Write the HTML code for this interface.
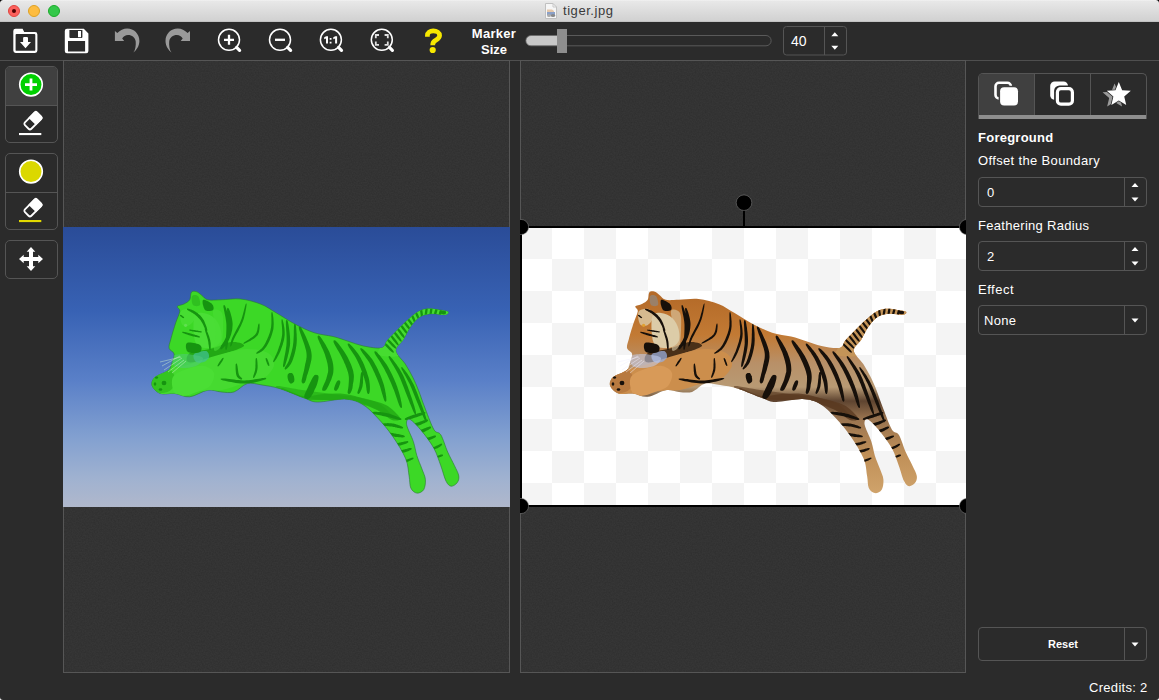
<!DOCTYPE html>
<html><head><meta charset="utf-8">
<style>
*{box-sizing:border-box;margin:0;padding:0}
html,body{width:1159px;height:700px;overflow:hidden;background:linear-gradient(#000 0,#000 50%,#fff 50%)}
body{font-family:"Liberation Sans",sans-serif;position:relative}
.a{position:absolute}
#win{position:absolute;left:0;top:0;width:1159px;height:700px;background:#2b2b2b;border-radius:3px 3px 3px 3px;overflow:hidden}
#title{left:0;top:0;width:1159px;height:22px;background:linear-gradient(#f5f5f5 0,#e8e8e8 1px,#d1d1d1 21px,#c2c2c2 21px);border-radius:3px 3px 0 0}
.tl{width:12px;height:12px;border-radius:50%;top:5px}
#toolbar{left:0;top:22px;width:1159px;height:38px;background:#2b2b2b}
#sep{left:0;top:60px;width:1159px;height:1px;background:#4f4f4f}
.panel{top:60px;height:613px;border:1px solid #565656;background:#333;overflow:hidden}
.grp{left:5px;width:53px;border:1px solid #555;border-radius:5px;overflow:hidden}
.lbl{color:#fff;font-size:13px;left:978px;white-space:nowrap}
.box{left:978px;width:169px;height:30px;border:1px solid #555;border-radius:4px}
.box .div{position:absolute;left:145px;top:0;width:1px;height:100%;background:#555}
</style></head><body>
<div id="win">
<div id="title" class="a">
  <div class="a tl" style="left:8px;background:#fc605c;border:1px solid #e0443e"><div class="a" style="left:3px;top:3px;width:4px;height:4px;border-radius:50%;background:#4d0000"></div></div>
  <div class="a tl" style="left:28px;background:#fdbc40;border:1px solid #dea123"></div>
  <div class="a tl" style="left:48px;background:#34c84a;border:1px solid #1aab29"></div>
  <svg class="a" style="left:545px;top:3px" width="12" height="16" viewBox="0 0 12 16"><path d="M0.5 0.5H8L11.5 4V15.5H0.5Z" fill="#f6f6f6" stroke="#c0c0c0"/><path d="M8 0.5V4H11.5" fill="none" stroke="#c8c8c8"/><path d="M2,6.5 H7 L9,8 V10 H2Z" fill="#d8a878" opacity="0.6"/><path d="M2,9 H10 V12 H2Z" fill="#8aa0c8"/><ellipse cx="8" cy="12.5" rx="2.2" ry="1.6" fill="#888"/><ellipse cx="4" cy="12.5" rx="2" ry="1.5" fill="#aaa"/></svg>
  <div class="a" style="left:563px;top:3px;font-size:13px;color:#3a3a3a;letter-spacing:0.55px">tiger.jpg</div>
</div>
<div id="toolbar" class="a"></div>
<div id="sep" class="a"></div>
<svg class="a" style="left:0;top:0" width="1159" height="60" viewBox="0 0 1159 60">
<g fill="#fff" fill-rule="evenodd">
<path d="M13.3,31 Q13.3,28.8 15.5,28.8 H22.6 L24.2,32 H35 Q37.4,32 37.4,34.4 V50.6 Q37.4,53 35,53 H15.7 Q13.3,53 13.3,50.6 Z M15.6,35 Q15.6,34.1 16.5,34.1 H34.4 Q35.3,34.1 35.3,35 V49.9 Q35.3,50.8 34.4,50.8 H16.5 Q15.6,50.8 15.6,49.9 Z"/>
<path d="M23.1,38 Q23.1,36.9 24.2,36.9 H26.9 Q28,36.9 28,38 V42 H31 L25.5,48.3 L20,42 H23.1 Z"/>
<path d="M67,28.8 H83.8 L88.4,33.4 V51 Q88.4,53.2 86.2,53.2 H67 Q64.8,53.2 64.8,51 V31 Q64.8,28.8 67,28.8 Z M69.4,30.1 V37 Q69.4,38 70.4,38 H81.4 Q82.4,38 82.4,37 V30.1 Z M68,41 V51.6 H85.1 V41 Z"/>
<rect x="78" y="31" width="3" height="6.2"/>
</g>
<g fill="#9a9a9a">
<path id="undo" d="M114.9,30.9 L117.3,33 C120,30.5 123.5,28.6 127.2,28.6 C134,28.6 139.4,34 139.4,41 C139.4,46 136.5,50 133.4,52.6 C135.5,49.5 136,45 135.7,41.4 C135.2,37.5 132,35 128,35 C125.5,35 123.5,36.3 122.2,38.4 L124.2,41 H114.9 Z"/>
<use href="#undo" transform="translate(304.9,0) scale(-1,1)"/>
</g>
<g fill="none" stroke="#fff">
<g id="mag"><circle cx="229" cy="39.8" r="10.5" stroke-width="1.5"/><path d="M236.6,47.4 L239.6,50.4" stroke-width="3.2" stroke-linecap="round"/></g>
<path d="M224,39.8 H234 M229,34.8 V44.8" stroke-width="2.3"/>
<use href="#mag" transform="translate(51,0)"/>
<path d="M275,39.8 H285" stroke-width="2.3"/>
<use href="#mag" transform="translate(101.9,0)"/>
<use href="#mag" transform="translate(152.8,0)"/>
<path d="M375.8,38.2 V35 H379 M384.6,35 H387.8 V38.2 M387.8,41.6 V44.8 H384.6 M379,44.8 H375.8 V41.6" stroke="#e0e0e0" stroke-width="1.8"/>
</g>
<path d="M324.2,37.2 L326.2,36.3 H328 V43.6 H326 V38.4 L324.2,39.2 Z M333.3,37.2 L335.3,36.3 H337.1 V43.6 H335.1 V38.4 L333.3,39.2 Z M329.7,37.9 H331.5 V39.7 H329.7 Z M329.7,41.8 H331.5 V43.6 H329.7 Z" fill="#fff"/>
<path d="M427.4,36.8 V35.5 C427.4,32.5 430,30.8 433.2,30.8 C436.8,30.8 439.6,32.8 439.6,35.5 C439.6,38.4 436.6,39.6 434.6,41 C433,42.2 432.7,43 432.7,45.2" fill="none" stroke="#f7e800" stroke-width="4.7"/><circle cx="432.7" cy="50" r="3.1" fill="#f7e800"/>
<text x="494" y="38" font-size="13" font-weight="bold" fill="#fff" text-anchor="middle" font-family="Liberation Sans" letter-spacing="0.3">Marker</text>
<text x="494" y="53.6" font-size="13" font-weight="bold" fill="#fff" text-anchor="middle" font-family="Liberation Sans">Size</text>
<path d="M558,35.5 H766 A5.15,5.15 0 0 1 766,45.8 H558" fill="none" stroke="#5a5a5a" stroke-width="1"/>
<path d="M531,35.5 H558 V45.8 H531 A5.15,5.15 0 0 1 531,35.5 Z" fill="#c8c8c8" stroke="#6a6a6a" stroke-width="0.8"/>
<rect x="557" y="29" width="10" height="24" fill="#8e8e8e"/>
<rect x="783.5" y="26.5" width="63" height="28.5" rx="3" fill="none" stroke="#555"/>
<path d="M824.5,26.5 V55" stroke="#555"/>
<text x="791" y="46" font-size="14" fill="#fff" font-family="Liberation Sans">40</text>
<path d="M831.3,36.3 L834.8,32.3 L838.3,36.3 Z M831.3,45.8 L838.3,45.8 L834.8,49.8 Z" fill="#fff"/>
</svg>

<!-- panels -->
<svg class="a" style="left:0;top:0;width:0;height:0"><filter id="nz" x="0" y="0" width="100%" height="100%"><feTurbulence type="fractalNoise" baseFrequency="0.7" numOctaves="2" seed="7"/><feColorMatrix values="0 0 0 0 0  0 0 0 0 0  0 0 0 0 0  0.22 0 0 0 -0.06"/></filter></svg>
<div class="a panel" style="left:63px;width:447px;background:#363636"><svg width="445" height="611" style="display:block"><rect width="445" height="611" filter="url(#nz)"/></svg></div>
<div class="a panel" style="left:520px;width:446px;background:#363636"><svg width="444" height="611" style="display:block"><rect width="444" height="611" filter="url(#nz)"/></svg></div>
<!--T-->
<svg class="a" style="left:0;top:0;z-index:2" width="1159" height="700" viewBox="0 0 1159 700">
<defs>
<linearGradient id="sky" x1="0" y1="0" x2="0" y2="1">
<stop offset="0" stop-color="#2a4c98"/><stop offset="0.3" stop-color="#3862b4"/><stop offset="0.55" stop-color="#5a80c8"/><stop offset="0.75" stop-color="#82a0d0"/><stop offset="0.9" stop-color="#a0b2d0"/><stop offset="1" stop-color="#b0b8cc"/>
</linearGradient>
<linearGradient id="orange" gradientUnits="userSpaceOnUse" x1="0" y1="295" x2="0" y2="495">
<stop offset="0" stop-color="#b46a28"/><stop offset="0.2" stop-color="#c27a34"/><stop offset="0.34" stop-color="#b89068"/><stop offset="0.46" stop-color="#b89a74"/><stop offset="0.53" stop-color="#5e4430"/><stop offset="0.62" stop-color="#9a7450"/><stop offset="0.8" stop-color="#c09058"/><stop offset="1" stop-color="#d0a46c"/></linearGradient>
<path id="tg" d="M649.3,292.4 C650.4,291.0 652.4,291.1 654.2,291.6 C656.0,292.1 658.1,294.1 660.0,295.5 C661.9,296.9 662.6,299.1 665.8,299.8 C668.9,300.5 673.4,299.9 678.9,299.8 C684.4,299.7 691.9,298.3 698.6,299.0 C705.3,299.7 713.1,301.9 719.0,304.2 C724.9,306.5 728.5,309.5 734.2,312.8 C739.9,316.1 746.9,320.9 753.2,324.2 C759.5,327.5 765.8,330.6 772.1,332.7 C778.4,334.8 785.4,335.1 791.1,336.5 C796.8,337.9 801.2,339.7 806.3,341.3 C811.4,342.9 816.0,344.9 821.5,346.0 C827.0,347.1 835.6,348.7 839.5,347.9 C843.4,347.1 843.2,343.1 845.0,341.0 C846.8,338.9 847.0,338.7 850.0,335.6 C853.0,332.5 859.2,326.1 863.3,322.3 C867.4,318.5 871.1,315.0 874.6,312.8 C878.1,310.6 880.3,309.5 884.1,309.0 C887.9,308.5 893.8,309.4 897.4,309.9 C901.0,310.4 905.0,311.0 906.0,311.8 C907.0,312.6 905.8,314.4 903.1,314.7 C900.4,315.0 893.9,313.4 889.8,313.7 C885.7,314.0 881.9,314.5 878.4,316.6 C874.9,318.7 871.8,322.3 869.0,326.1 C866.2,329.9 863.9,335.3 861.4,339.4 C858.9,343.5 853.5,346.6 853.8,350.7 C854.1,354.8 860.5,359.6 863.3,364.0 C866.1,368.4 868.6,372.9 870.8,377.3 C873.0,381.7 874.4,385.0 876.5,390.3 C878.6,395.6 880.8,402.5 883.4,409.1 C886.0,415.7 889.4,425.4 892.0,429.7 C894.6,434.0 896.5,431.1 898.8,434.8 C901.1,438.5 903.4,446.9 905.7,452.0 C908.0,457.1 910.6,461.7 912.5,465.7 C914.4,469.7 916.4,473.1 916.8,476.0 C917.2,478.9 916.4,481.1 915.1,482.8 C913.8,484.5 911.0,486.5 909.1,486.2 C907.2,485.9 905.7,484.5 904.0,481.1 C902.3,477.7 900.8,471.1 898.8,465.7 C896.8,460.3 895.1,454.2 892.0,448.5 C888.9,442.8 884.0,436.2 880.0,431.4 C876.0,426.5 870.6,420.5 868.0,419.4 C865.4,418.3 864.0,420.9 864.6,424.6 C865.2,428.3 869.7,436.6 871.4,441.7 C873.1,446.8 873.4,450.8 874.8,455.4 C876.2,460.0 878.6,465.1 880.0,469.1 C881.4,473.1 883.1,476.0 883.4,479.4 C883.7,482.8 883.1,487.4 881.7,489.7 C880.3,492.0 876.9,493.4 874.8,493.1 C872.6,492.8 870.1,490.9 868.8,488.0 C867.5,485.1 868.0,480.9 867.1,476.0 C866.2,471.1 866.4,465.4 863.7,458.8 C861.0,452.2 855.5,443.4 850.8,436.5 C846.1,429.6 840.5,423.1 835.4,417.7 C830.3,412.3 825.5,407.1 820.0,404.0 C814.5,400.9 809.9,399.4 802.5,399.1 C795.1,398.8 782.5,402.1 775.9,402.0 C769.2,401.9 768.9,400.4 762.6,398.2 C756.3,396.0 745.1,390.9 738.0,388.7 C730.9,386.5 725.5,385.9 720.0,385.0 C714.5,384.1 709.9,382.5 705.2,383.6 C700.6,384.8 696.5,390.5 692.1,391.9 C687.7,393.3 683.3,392.2 678.9,391.9 C674.5,391.6 671.0,389.4 665.8,390.2 C660.6,391.0 653.2,396.2 647.7,396.8 C642.2,397.4 637.8,394.1 632.9,393.5 C628.0,392.9 621.9,394.9 618.1,393.5 C614.3,392.1 610.7,388.0 609.9,385.3 C609.1,382.6 610.5,379.6 613.2,377.1 C615.9,374.6 623.6,372.7 626.3,370.5 C629.0,368.3 628.6,366.6 629.6,363.9 C630.6,361.1 632.5,356.6 632.1,354.0 C631.7,351.4 627.7,350.8 627.1,348.3 C626.5,345.8 627.7,343.4 628.8,339.2 C629.9,334.9 632.2,327.4 633.7,322.8 C635.2,318.2 637.5,314.0 637.8,311.3 C638.1,308.6 634.6,307.6 635.3,306.4 C636.0,305.2 639.9,305.1 642.0,304.0 C644.1,302.9 646.5,301.7 647.7,299.8 C648.9,297.9 648.2,293.8 649.3,292.4 Z"/>
<clipPath id="tclip"><use href="#tg"/></clipPath>
<clipPath id="clipR"><rect x="520" y="61" width="446" height="611"/></clipPath>
<clipPath id="clipImg"><rect x="522" y="228" width="444" height="277"/></clipPath>
</defs>
<rect x="63" y="227" width="447" height="280" fill="url(#sky)"/>
<g transform="translate(-458,0)">
<use href="#tg" fill="#3cd826" stroke="#2a7a30" stroke-width="0.6"/>
<g clip-path="url(#tclip)">
<path d="M648.0,353.0 C651.7,350.8 661.0,350.8 668.0,349.0 C675.0,347.2 684.3,342.5 690.0,342.0 C695.7,341.5 703.3,344.0 702.0,346.0 C700.7,348.0 688.7,351.7 682.0,354.0 C675.3,356.3 668.0,358.7 662.0,360.0 C656.0,361.3 648.3,363.2 646.0,362.0 C643.7,360.8 644.3,355.2 648.0,353.0 Z" fill="#22a814"/>
<path d="M611.0,380.0 C611.0,376.5 613.5,374.0 617.0,372.0 C620.5,370.0 627.3,369.2 632.0,368.0 C636.7,366.8 640.3,366.3 645.0,365.0 C649.7,363.7 654.2,361.8 660.0,360.0 C665.8,358.2 672.7,355.8 680.0,354.0 C687.3,352.2 696.3,349.2 704.0,349.0 C711.7,348.8 721.3,350.3 726.0,353.0 C730.7,355.7 732.7,360.8 732.0,365.0 C731.3,369.2 727.3,374.8 722.0,378.0 C716.7,381.2 707.0,382.0 700.0,384.0 C693.0,386.0 687.5,388.8 680.0,390.0 C672.5,391.2 662.5,390.3 655.0,391.0 C647.5,391.7 641.3,393.7 635.0,394.0 C628.7,394.3 621.0,395.3 617.0,393.0 C613.0,390.7 611.0,383.5 611.0,380.0 Z" fill="#46da30"/>
<path d="M836.0,354.0 C834.3,351.0 841.7,343.7 846.0,338.0 C850.3,332.3 856.0,325.0 862.0,320.0 C868.0,315.0 874.3,309.5 882.0,308.0 C889.7,306.5 904.3,309.5 908.0,311.0 C911.7,312.5 907.7,316.2 904.0,317.0 C900.3,317.8 891.3,314.2 886.0,316.0 C880.7,317.8 876.3,323.0 872.0,328.0 C867.7,333.0 862.7,341.3 860.0,346.0 C857.3,350.7 860.0,354.7 856.0,356.0 C852.0,357.3 837.7,357.0 836.0,354.0 Z" fill="#46dc30"/>
<path d="M610.0,381.0 C610.8,378.2 613.2,374.0 616.0,372.0 C618.8,370.0 624.2,368.0 627.0,369.0 C629.8,370.0 632.5,374.7 633.0,378.0 C633.5,381.3 632.2,386.5 630.0,389.0 C627.8,391.5 623.2,393.0 620.0,393.0 C616.8,393.0 612.7,391.0 611.0,389.0 C609.3,387.0 609.2,383.8 610.0,381.0 Z" fill="#34c420"/>
<path d="M631.0,377.0 C633.2,373.2 639.8,370.8 645.0,369.0 C650.2,367.2 657.5,365.3 662.0,366.0 C666.5,366.7 671.0,369.7 672.0,373.0 C673.0,376.3 670.8,382.8 668.0,386.0 C665.2,389.2 659.5,390.3 655.0,392.0 C650.5,393.7 644.8,396.0 641.0,396.0 C637.2,396.0 633.7,395.2 632.0,392.0 C630.3,388.8 628.8,380.8 631.0,377.0 Z" fill="#4ade34"/>
<path d="M652.0,354.0 C653.7,352.2 661.5,350.5 664.0,351.0 C666.5,351.5 667.3,355.2 667.0,357.0 C666.7,358.8 664.2,361.2 662.0,362.0 C659.8,362.8 655.7,363.3 654.0,362.0 C652.3,360.7 650.3,355.8 652.0,354.0 Z" fill="#40c090" opacity="0.75"/>
<ellipse cx="614.5" cy="377.5" rx="1.6" ry="1.2" fill="#169410"/><ellipse cx="613" cy="384" rx="1.3" ry="1.7" fill="#169410"/><ellipse cx="618.5" cy="389.5" rx="1.8" ry="1.2" fill="#169410"/><ellipse cx="622" cy="383" rx="2.4" ry="2.2" fill="#169410"/>
<path d="M735.0,386.0 C738.3,385.7 750.8,388.7 760.0,390.0 C769.2,391.3 780.0,392.7 790.0,394.0 C800.0,395.3 812.0,396.3 820.0,398.0 C828.0,399.7 832.7,400.7 838.0,404.0 C843.3,407.3 851.7,416.7 852.0,418.0 C852.3,419.3 846.2,414.7 840.0,412.0 C833.8,409.3 825.0,404.0 815.0,402.0 C805.0,400.0 789.2,400.8 780.0,400.0 C770.8,399.2 766.7,398.3 760.0,397.0 C753.3,395.7 744.2,393.8 740.0,392.0 C735.8,390.2 731.7,386.3 735.0,386.0 Z" fill="#22a814" opacity="0.6"/>
<path d="M740.0,388.0 C742.7,388.2 754.0,395.0 761.0,396.0 C768.0,397.0 774.9,394.3 781.8,394.0 C788.7,393.7 795.6,393.2 802.5,394.0 C809.4,394.8 816.3,397.2 823.2,399.0 C830.1,400.8 838.1,401.8 843.9,405.0 C849.7,408.2 857.0,415.5 858.0,418.0 C859.0,420.5 853.8,421.3 850.0,420.0 C846.2,418.7 840.8,412.8 835.0,410.0 C829.2,407.2 822.5,404.7 815.0,403.0 C807.5,401.3 798.3,400.5 790.0,400.0 C781.7,399.5 772.5,400.8 765.0,400.0 C757.5,399.2 749.2,397.0 745.0,395.0 C740.8,393.0 737.3,387.8 740.0,388.0 Z" fill="#22a814" opacity="0.8"/>
<path d="M652.3,316.6 C653.8,312.5 657.7,312.7 661.0,312.9 C664.3,313.1 669.3,315.2 672.2,317.9 C675.1,320.6 677.5,325.1 678.5,329.0 C679.5,332.9 680.0,338.4 678.5,341.5 C677.0,344.6 673.3,346.9 669.8,347.7 C666.3,348.5 660.2,348.1 657.3,346.5 C654.4,344.9 653.1,342.8 652.3,337.8 C651.5,332.8 650.8,320.8 652.3,316.6 Z" fill="#4ade36"/>
<path d="M638.7,311.6 C640.2,309.1 646.1,308.3 648.6,309.1 C651.1,309.9 653.8,313.9 653.6,316.6 C653.4,319.3 649.7,324.1 647.4,325.3 C645.1,326.5 641.3,326.3 639.9,324.0 C638.5,321.7 637.2,314.1 638.7,311.6 Z" fill="#4ade36" opacity="0.8"/>
<path d="M671.0,311.0 C672.0,308.2 678.3,309.8 680.0,313.0 C681.7,316.2 681.2,324.5 681.0,330.0 C680.8,335.5 680.5,342.7 679.0,346.0 C677.5,349.3 672.8,352.7 672.0,350.0 C671.2,347.3 674.2,336.5 674.0,330.0 C673.8,323.5 670.0,313.8 671.0,311.0 Z" fill="#4ade36" opacity="0.6"/>
<path d="M629.0,357.0 C630.2,355.0 636.2,354.3 640.0,354.0 C643.8,353.7 648.5,354.3 652.0,355.0 C655.5,355.7 660.3,356.3 661.0,358.0 C661.7,359.7 658.8,363.3 656.0,365.0 C653.2,366.7 647.8,367.8 644.0,368.0 C640.2,368.2 635.5,367.8 633.0,366.0 C630.5,364.2 627.8,359.0 629.0,357.0 Z" fill="#50c880" opacity="0.5"/>
<path fill="#169410" d="M744.4,320.0 L743.9,321.2 L743.9,322.7 L743.9,324.4 L744.0,326.3 L744.1,328.3 L744.2,330.5 L744.4,332.7 L744.5,335.0 L744.6,337.2 L744.6,339.4 L744.6,341.5 L744.5,343.5 L744.4,345.4 L744.1,347.6 L743.8,349.8 L743.4,352.0 L743.0,354.3 L742.5,356.5 L742.1,358.7 L741.7,360.8 L741.4,362.7 L741.1,364.4 L741.0,365.9 L741.3,367.1 L741.9,367.3 L742.7,366.3 L743.3,364.9 L743.8,363.3 L744.4,361.4 L745.0,359.4 L745.6,357.2 L746.1,355.0 L746.7,352.7 L747.1,350.4 L747.5,348.1 L747.9,345.8 L748.1,343.7 L748.1,341.6 L748.1,339.4 L748.0,337.1 L747.8,334.7 L747.6,332.4 L747.3,330.2 L747.0,328.0 L746.7,326.0 L746.4,324.1 L746.0,322.4 L745.7,321.1 L745.0,320.0ZM756.9,326.4 L756.8,328.0 L757.2,329.7 L757.8,331.6 L758.5,333.8 L759.4,336.2 L760.2,338.6 L761.1,341.1 L762.0,343.6 L762.8,345.9 L763.4,348.2 L764.0,350.2 L764.3,351.9 L764.5,353.4 L764.6,354.7 L764.6,356.0 L764.6,357.2 L764.4,358.3 L764.3,359.4 L764.0,360.6 L763.8,361.7 L763.5,362.9 L763.2,364.1 L763.0,365.4 L762.7,366.7 L762.5,368.0 L762.2,369.4 L761.9,370.9 L761.5,372.4 L761.1,373.9 L760.7,375.4 L760.4,376.9 L760.1,378.3 L759.8,379.6 L759.6,380.8 L759.6,381.8 L760.0,382.8 L760.8,383.0 L761.7,382.5 L762.3,381.6 L762.8,380.6 L763.4,379.4 L764.0,378.1 L764.6,376.7 L765.1,375.2 L765.7,373.7 L766.2,372.1 L766.7,370.6 L767.1,369.1 L767.5,367.7 L767.8,366.5 L768.1,365.3 L768.4,364.1 L768.7,362.9 L769.0,361.6 L769.3,360.3 L769.5,359.0 L769.6,357.5 L769.7,356.0 L769.6,354.4 L769.4,352.7 L769.1,350.9 L768.6,348.9 L767.9,346.8 L767.0,344.4 L766.1,342.0 L765.0,339.6 L764.0,337.1 L762.9,334.7 L761.8,332.5 L760.7,330.4 L759.7,328.6 L758.8,327.1 L757.7,326.2ZM775.7,335.9 L775.6,337.2 L775.9,338.5 L776.5,340.0 L777.2,341.6 L777.9,343.3 L778.8,345.1 L779.6,346.9 L780.5,348.8 L781.3,350.6 L782.0,352.3 L782.7,354.0 L783.2,355.5 L783.6,356.9 L784.1,358.4 L784.5,359.8 L784.8,361.1 L785.2,362.5 L785.5,363.8 L785.7,365.1 L785.9,366.4 L786.1,367.7 L786.1,369.0 L786.2,370.3 L786.1,371.6 L786.0,373.0 L785.7,374.6 L785.3,376.3 L784.9,378.0 L784.3,379.8 L783.8,381.6 L783.2,383.4 L782.7,385.1 L782.2,386.6 L781.8,388.1 L781.7,389.4 L782.0,390.6 L782.8,390.8 L783.8,390.2 L784.6,389.2 L785.3,387.9 L786.1,386.5 L786.9,384.9 L787.7,383.1 L788.5,381.3 L789.3,379.5 L789.9,377.6 L790.5,375.8 L791.0,373.9 L791.3,372.2 L791.4,370.5 L791.5,368.9 L791.4,367.3 L791.3,365.8 L791.1,364.2 L790.8,362.7 L790.5,361.2 L790.1,359.7 L789.6,358.2 L789.1,356.7 L788.6,355.3 L788.0,353.7 L787.4,352.1 L786.5,350.3 L785.6,348.5 L784.6,346.7 L783.6,344.8 L782.5,343.1 L781.5,341.4 L780.4,339.8 L779.4,338.3 L778.5,337.1 L777.6,336.1 L776.5,335.5ZM791.6,340.6 L791.5,341.9 L791.9,343.1 L792.6,344.5 L793.4,345.9 L794.3,347.5 L795.2,349.2 L796.2,350.8 L797.2,352.5 L798.2,354.2 L799.1,355.9 L799.9,357.4 L800.6,358.9 L801.3,360.3 L801.9,361.7 L802.5,363.2 L803.2,364.6 L803.7,366.0 L804.3,367.4 L804.8,368.8 L805.3,370.2 L805.7,371.5 L806.1,372.8 L806.4,374.1 L806.6,375.3 L806.8,376.6 L806.9,377.9 L806.9,379.3 L806.9,380.7 L806.8,382.2 L806.7,383.6 L806.6,385.0 L806.5,386.3 L806.4,387.6 L806.4,388.7 L806.6,389.8 L807.2,390.6 L808.0,390.8 L808.8,390.1 L809.3,389.3 L809.7,388.2 L810.1,387.0 L810.5,385.7 L810.9,384.3 L811.2,382.7 L811.5,381.2 L811.7,379.5 L811.8,377.9 L811.9,376.3 L811.8,374.7 L811.5,373.1 L811.3,371.6 L810.9,370.1 L810.4,368.5 L809.9,367.0 L809.4,365.5 L808.8,364.0 L808.1,362.5 L807.4,361.0 L806.7,359.5 L806.0,358.0 L805.2,356.5 L804.3,355.0 L803.4,353.4 L802.3,351.7 L801.1,350.0 L800.0,348.4 L798.8,346.8 L797.6,345.3 L796.5,343.8 L795.4,342.6 L794.4,341.5 L793.4,340.6 L792.2,340.2ZM805.7,343.8 L805.8,344.9 L806.3,346.0 L806.9,347.2 L807.7,348.4 L808.6,349.8 L809.6,351.2 L810.6,352.7 L811.6,354.2 L812.6,355.8 L813.5,357.3 L814.3,358.8 L815.1,360.3 L815.8,361.8 L816.6,363.4 L817.3,365.1 L818.0,366.8 L818.8,368.6 L819.5,370.4 L820.1,372.2 L820.8,373.9 L821.3,375.6 L821.9,377.3 L822.4,378.8 L822.8,380.2 L823.2,381.6 L823.5,382.9 L823.8,384.3 L824.0,385.6 L824.2,386.9 L824.4,388.2 L824.5,389.4 L824.7,390.5 L824.9,391.5 L825.1,392.5 L825.4,393.3 L826.1,393.9 L826.7,393.9 L827.3,393.2 L827.5,392.4 L827.7,391.4 L827.8,390.4 L827.9,389.2 L827.9,388.0 L827.9,386.6 L827.8,385.2 L827.7,383.7 L827.5,382.2 L827.3,380.7 L827.0,379.2 L826.6,377.6 L826.1,375.9 L825.5,374.2 L825.0,372.5 L824.3,370.6 L823.6,368.8 L822.9,367.0 L822.2,365.1 L821.4,363.3 L820.6,361.6 L819.7,359.9 L818.9,358.3 L818.0,356.7 L816.9,355.1 L815.9,353.6 L814.7,352.0 L813.6,350.5 L812.4,349.1 L811.3,347.8 L810.2,346.6 L809.2,345.5 L808.2,344.5 L807.3,343.8 L806.3,343.4ZM818.3,348.5 L818.4,349.6 L818.9,350.6 L819.6,351.6 L820.3,352.7 L821.2,353.9 L822.2,355.2 L823.1,356.5 L824.1,357.9 L825.1,359.3 L826.1,360.7 L827.0,362.1 L827.8,363.5 L828.6,364.9 L829.4,366.5 L830.2,368.1 L831.0,369.8 L831.8,371.5 L832.7,373.3 L833.4,375.1 L834.2,376.8 L835.0,378.6 L835.7,380.3 L836.4,382.0 L837.0,383.6 L837.6,385.2 L838.2,386.9 L838.7,388.7 L839.2,390.5 L839.7,392.2 L840.2,394.0 L840.7,395.6 L841.2,397.2 L841.6,398.6 L842.1,399.9 L842.6,401.0 L843.4,401.8 L844.0,401.6 L844.4,400.6 L844.4,399.4 L844.3,398.1 L844.2,396.6 L843.9,394.9 L843.7,393.2 L843.3,391.4 L843.0,389.5 L842.5,387.6 L842.1,385.8 L841.6,383.9 L841.0,382.2 L840.4,380.5 L839.8,378.7 L839.1,376.9 L838.3,375.1 L837.5,373.3 L836.7,371.4 L835.9,369.6 L835.0,367.8 L834.1,366.1 L833.2,364.4 L832.3,362.8 L831.4,361.3 L830.5,359.8 L829.4,358.3 L828.3,356.9 L827.2,355.5 L826.0,354.2 L824.9,352.9 L823.7,351.8 L822.7,350.7 L821.7,349.8 L820.7,349.0 L819.9,348.4 L818.9,348.1ZM832.4,351.6 L832.5,352.7 L832.9,353.8 L833.6,355.0 L834.4,356.2 L835.2,357.6 L836.2,359.1 L837.2,360.6 L838.2,362.1 L839.2,363.7 L840.1,365.2 L841.0,366.8 L841.9,368.3 L842.7,369.8 L843.5,371.4 L844.3,373.0 L845.1,374.6 L845.9,376.3 L846.7,378.1 L847.5,379.8 L848.3,381.5 L849.1,383.3 L849.8,385.0 L850.5,386.7 L851.2,388.4 L851.9,390.1 L852.6,391.9 L853.2,393.8 L853.9,395.7 L854.6,397.7 L855.2,399.6 L855.8,401.4 L856.4,403.1 L857.0,404.7 L857.6,406.1 L858.2,407.3 L859.1,408.1 L859.7,407.9 L860.0,406.8 L859.9,405.5 L859.7,404.0 L859.4,402.3 L859.0,400.5 L858.6,398.6 L858.1,396.6 L857.6,394.6 L857.0,392.6 L856.4,390.6 L855.8,388.7 L855.2,386.8 L854.5,385.1 L853.9,383.3 L853.1,381.5 L852.4,379.7 L851.6,377.9 L850.8,376.2 L850.0,374.4 L849.1,372.7 L848.2,371.0 L847.3,369.3 L846.5,367.7 L845.5,366.1 L844.6,364.6 L843.5,363.0 L842.4,361.4 L841.3,359.9 L840.2,358.4 L839.0,357.0 L837.9,355.6 L836.8,354.4 L835.8,353.3 L834.9,352.3 L834.0,351.6 L833.0,351.2ZM846.6,356.3 L846.7,357.4 L847.2,358.6 L847.9,359.9 L848.7,361.3 L849.6,362.8 L850.6,364.4 L851.6,366.1 L852.6,367.8 L853.6,369.5 L854.6,371.2 L855.4,372.8 L856.2,374.3 L856.9,375.8 L857.6,377.2 L858.3,378.7 L858.9,380.2 L859.5,381.8 L860.1,383.3 L860.7,384.8 L861.4,386.4 L862.0,388.0 L862.6,389.6 L863.2,391.3 L863.9,393.0 L864.6,394.7 L865.4,396.7 L866.2,398.7 L867.0,400.8 L867.8,402.9 L868.7,405.0 L869.5,407.0 L870.3,408.9 L871.0,410.7 L871.7,412.2 L872.4,413.5 L873.3,414.4 L873.9,414.2 L874.0,412.9 L873.8,411.5 L873.4,409.9 L872.8,408.0 L872.3,406.0 L871.6,404.0 L870.9,401.8 L870.2,399.6 L869.5,397.5 L868.8,395.4 L868.1,393.4 L867.5,391.6 L866.9,389.9 L866.3,388.3 L865.7,386.6 L865.1,385.0 L864.5,383.4 L863.9,381.8 L863.2,380.3 L862.6,378.7 L861.9,377.1 L861.2,375.6 L860.4,374.1 L859.6,372.5 L858.7,370.9 L857.7,369.3 L856.6,367.6 L855.5,366.0 L854.4,364.3 L853.2,362.7 L852.1,361.2 L851.0,359.8 L850.0,358.5 L849.0,357.4 L848.2,356.5 L847.2,355.9ZM859.3,367.3 L859.3,368.3 L859.7,369.4 L860.3,370.5 L861.0,371.8 L861.7,373.2 L862.5,374.6 L863.4,376.1 L864.2,377.6 L865.1,379.2 L865.9,380.7 L866.7,382.2 L867.4,383.6 L868.1,385.1 L868.7,386.5 L869.4,388.0 L870.0,389.6 L870.6,391.1 L871.3,392.7 L871.9,394.2 L872.5,395.8 L873.2,397.4 L873.8,399.1 L874.5,400.7 L875.1,402.3 L875.9,404.0 L876.6,405.8 L877.4,407.7 L878.2,409.7 L879.0,411.7 L879.8,413.6 L880.6,415.5 L881.4,417.3 L882.2,418.9 L882.8,420.3 L883.5,421.5 L884.4,422.3 L884.8,422.1 L884.9,420.9 L884.6,419.6 L884.2,418.1 L883.7,416.4 L883.1,414.6 L882.4,412.6 L881.7,410.6 L881.0,408.6 L880.3,406.6 L879.6,404.7 L878.9,402.8 L878.3,401.1 L877.6,399.4 L877.0,397.8 L876.4,396.2 L875.8,394.6 L875.2,392.9 L874.5,391.3 L873.9,389.8 L873.2,388.2 L872.6,386.6 L871.9,385.1 L871.1,383.6 L870.4,382.2 L869.6,380.7 L868.7,379.1 L867.8,377.6 L866.8,376.1 L865.9,374.6 L864.9,373.1 L863.9,371.8 L863.0,370.5 L862.2,369.4 L861.3,368.4 L860.6,367.6 L859.7,367.1ZM774.1,374.8 L772.6,375.1 L771.8,376.0 L771.0,377.1 L770.3,378.3 L769.5,379.7 L768.8,381.2 L768.0,382.7 L767.3,384.2 L766.7,385.6 L766.1,387.0 L765.5,388.2 L765.0,389.2 L764.6,390.1 L764.2,390.9 L763.9,391.7 L763.5,392.5 L763.2,393.2 L762.9,393.9 L762.6,394.6 L762.4,395.3 L762.3,395.9 L762.2,396.6 L762.3,397.3 L763.1,398.3 L764.1,398.9 L765.3,399.2 L766.0,399.1 L766.5,398.8 L767.1,398.4 L767.7,397.9 L768.2,397.4 L768.8,396.7 L769.4,396.0 L770.0,395.1 L770.5,394.2 L771.0,393.3 L771.6,392.2 L772.1,391.1 L772.6,389.7 L773.2,388.3 L773.7,386.7 L774.2,385.1 L774.7,383.5 L775.2,381.9 L775.5,380.4 L775.8,378.9 L776.0,377.6 L775.9,376.4 L775.1,375.2ZM747.4,373.1 L746.1,373.9 L745.7,374.7 L745.6,375.6 L745.5,376.6 L745.6,377.6 L745.8,378.7 L746.1,379.7 L746.4,380.7 L746.8,381.6 L747.3,382.3 L747.9,382.9 L749.5,383.1 L750.5,382.9 L751.8,382.1 L752.2,381.3 L752.3,380.4 L752.4,379.4 L752.3,378.4 L752.1,377.3 L751.8,376.3 L751.5,375.3 L751.1,374.4 L750.6,373.7 L750.0,373.1 L748.4,372.9ZM704.1,303.6 L703.6,304.3 L703.3,305.3 L702.9,306.5 L702.6,307.9 L702.2,309.3 L701.8,310.9 L701.4,312.5 L701.0,314.1 L700.5,315.8 L700.0,317.4 L699.5,318.9 L699.0,320.3 L698.4,321.7 L697.8,323.2 L697.0,324.7 L696.2,326.2 L695.4,327.8 L694.6,329.3 L693.8,330.8 L693.0,332.3 L692.3,333.7 L691.6,335.0 L691.0,336.3 L690.4,337.5 L690.0,338.5 L689.6,339.6 L689.3,340.5 L689.0,341.4 L688.8,342.2 L688.6,343.0 L688.5,343.7 L688.4,344.3 L688.3,344.9 L688.3,345.4 L688.3,345.9 L688.4,346.4 L688.8,346.4 L689.2,346.1 L689.4,345.7 L689.6,345.3 L689.9,344.7 L690.1,344.1 L690.3,343.5 L690.6,342.8 L690.8,342.0 L691.2,341.2 L691.5,340.3 L691.9,339.3 L692.4,338.3 L692.9,337.2 L693.5,336.0 L694.2,334.7 L695.0,333.3 L695.8,331.9 L696.6,330.4 L697.4,328.8 L698.2,327.3 L699.0,325.7 L699.7,324.1 L700.4,322.6 L701.0,321.1 L701.5,319.5 L702.0,317.9 L702.4,316.3 L702.8,314.6 L703.2,312.9 L703.5,311.3 L703.8,309.7 L704.1,308.2 L704.3,306.8 L704.5,305.6 L704.6,304.5 L704.5,303.6ZM685.4,308.0 L685.0,308.9 L685.0,309.9 L685.1,311.1 L685.3,312.4 L685.5,313.8 L685.7,315.2 L686.0,316.7 L686.2,318.2 L686.4,319.7 L686.5,321.1 L686.6,322.4 L686.6,323.6 L686.6,324.8 L686.5,325.9 L686.3,327.1 L686.2,328.3 L686.0,329.4 L685.7,330.6 L685.5,331.7 L685.2,332.9 L684.9,334.0 L684.6,335.1 L684.2,336.1 L683.9,337.2 L683.5,338.2 L683.0,339.2 L682.5,340.3 L681.9,341.4 L681.2,342.5 L680.6,343.6 L680.0,344.6 L679.4,345.6 L678.9,346.6 L678.5,347.4 L678.2,348.3 L678.3,349.1 L678.9,349.5 L679.7,349.3 L680.3,348.7 L681.0,348.1 L681.8,347.3 L682.5,346.4 L683.3,345.4 L684.1,344.4 L684.9,343.3 L685.6,342.1 L686.4,341.0 L687.0,339.8 L687.5,338.6 L688.0,337.5 L688.4,336.3 L688.8,335.2 L689.2,333.9 L689.5,332.7 L689.8,331.5 L690.1,330.2 L690.3,328.9 L690.4,327.6 L690.5,326.3 L690.6,324.9 L690.6,323.6 L690.5,322.2 L690.3,320.7 L690.0,319.1 L689.7,317.6 L689.3,316.0 L688.9,314.5 L688.5,313.0 L688.1,311.7 L687.6,310.4 L687.2,309.4 L686.7,308.5 L686.0,307.8ZM716.9,323.6 L716.5,324.1 L716.2,324.8 L716.0,325.6 L715.9,326.6 L715.7,327.6 L715.5,328.6 L715.3,329.7 L715.1,330.7 L714.7,331.7 L714.4,332.7 L713.9,333.6 L713.4,334.3 L712.8,335.0 L711.9,335.8 L710.8,336.7 L709.7,337.5 L708.4,338.3 L707.2,339.2 L705.9,340.0 L704.7,340.7 L703.6,341.4 L702.6,342.1 L701.8,342.7 L701.3,343.5 L701.5,343.7 L702.3,343.7 L703.3,343.3 L704.3,342.8 L705.5,342.2 L706.8,341.6 L708.2,340.9 L709.5,340.1 L710.9,339.3 L712.1,338.4 L713.3,337.5 L714.3,336.6 L715.2,335.7 L715.9,334.7 L716.4,333.6 L716.8,332.4 L717.1,331.2 L717.3,330.1 L717.5,328.9 L717.6,327.8 L717.6,326.7 L717.6,325.8 L717.6,324.9 L717.5,324.2 L717.3,323.6ZM729.8,312.1 L729.4,313.0 L729.3,314.0 L729.3,315.3 L729.3,316.6 L729.4,318.1 L729.4,319.7 L729.4,321.3 L729.4,322.9 L729.3,324.6 L729.2,326.1 L729.0,327.6 L728.7,329.0 L728.4,330.4 L728.0,331.9 L727.5,333.4 L726.9,334.9 L726.4,336.4 L725.7,337.9 L725.1,339.4 L724.4,340.8 L723.8,342.2 L723.1,343.5 L722.4,344.7 L721.8,345.7 L721.2,346.6 L720.5,347.4 L719.8,348.2 L719.1,348.9 L718.3,349.6 L717.5,350.2 L716.8,350.8 L716.1,351.3 L715.4,351.8 L714.9,352.3 L714.4,352.8 L714.2,353.4 L714.4,353.8 L715.1,353.8 L715.7,353.6 L716.3,353.3 L717.1,352.9 L717.9,352.5 L718.8,351.9 L719.7,351.4 L720.6,350.7 L721.5,349.9 L722.4,349.1 L723.2,348.1 L724.0,347.1 L724.7,346.0 L725.4,344.8 L726.1,343.4 L726.9,342.0 L727.6,340.5 L728.2,339.0 L728.9,337.4 L729.5,335.8 L730.0,334.2 L730.5,332.6 L730.9,331.1 L731.3,329.6 L731.5,328.0 L731.6,326.3 L731.7,324.6 L731.7,322.9 L731.6,321.2 L731.5,319.6 L731.4,318.0 L731.2,316.5 L731.0,315.1 L730.8,313.9 L730.6,312.9 L730.2,312.1ZM739.8,319.3 L739.5,320.1 L739.5,321.1 L739.5,322.2 L739.6,323.5 L739.8,324.9 L739.9,326.3 L740.0,327.8 L740.1,329.3 L740.2,330.8 L740.2,332.2 L740.2,333.6 L740.1,334.9 L739.9,336.1 L739.7,337.4 L739.4,338.7 L739.1,340.1 L738.8,341.4 L738.4,342.7 L738.0,344.1 L737.6,345.4 L737.1,346.6 L736.7,347.9 L736.3,349.1 L735.9,350.2 L735.5,351.4 L735.0,352.5 L734.6,353.6 L734.1,354.7 L733.5,355.8 L733.0,356.9 L732.6,357.9 L732.1,358.9 L731.7,359.7 L731.4,360.6 L731.2,361.3 L731.2,362.0 L731.6,362.2 L732.2,361.8 L732.7,361.3 L733.2,360.6 L733.7,359.8 L734.3,358.9 L734.9,357.9 L735.5,356.8 L736.1,355.8 L736.7,354.6 L737.3,353.5 L737.8,352.3 L738.3,351.2 L738.8,350.0 L739.2,348.8 L739.7,347.5 L740.1,346.2 L740.6,344.9 L741.0,343.5 L741.4,342.1 L741.8,340.7 L742.1,339.3 L742.3,337.9 L742.5,336.5 L742.7,335.1 L742.7,333.7 L742.7,332.2 L742.6,330.6 L742.5,329.1 L742.3,327.5 L742.0,326.0 L741.8,324.6 L741.5,323.2 L741.2,322.0 L740.9,320.9 L740.7,320.0 L740.2,319.3ZM752.6,323.6 L752.2,324.6 L752.0,325.8 L751.9,327.3 L751.9,328.9 L751.8,330.7 L751.8,332.6 L751.8,334.5 L751.7,336.4 L751.6,338.3 L751.5,340.1 L751.4,341.9 L751.2,343.4 L751.0,344.9 L750.8,346.4 L750.5,347.9 L750.1,349.5 L749.8,350.9 L749.4,352.4 L749.0,353.8 L748.6,355.2 L748.2,356.6 L747.8,357.8 L747.4,359.0 L747.0,360.1 L746.7,361.1 L746.2,362.0 L745.8,362.8 L745.3,363.7 L744.9,364.5 L744.4,365.2 L743.9,365.9 L743.5,366.6 L743.1,367.3 L742.8,367.9 L742.6,368.5 L742.7,369.1 L743.1,369.5 L743.8,369.4 L744.3,369.1 L744.8,368.7 L745.4,368.2 L746.0,367.6 L746.6,366.9 L747.2,366.2 L747.9,365.3 L748.5,364.5 L749.1,363.5 L749.6,362.4 L750.2,361.3 L750.6,360.2 L751.1,358.9 L751.5,357.6 L752.0,356.2 L752.4,354.8 L752.8,353.3 L753.2,351.8 L753.5,350.2 L753.9,348.6 L754.1,347.0 L754.4,345.4 L754.6,343.8 L754.7,342.1 L754.8,340.3 L754.8,338.4 L754.7,336.4 L754.7,334.4 L754.5,332.5 L754.4,330.6 L754.3,328.9 L754.1,327.2 L753.9,325.8 L753.7,324.6 L753.2,323.6ZM681.3,357.8 L680.6,358.0 L680.1,358.5 L679.5,359.2 L679.0,359.9 L678.4,360.7 L677.8,361.6 L677.2,362.5 L676.6,363.4 L676.2,364.2 L675.8,365.0 L675.5,365.6 L675.6,366.3 L675.8,366.5 L676.5,366.3 L677.0,365.8 L677.6,365.1 L678.1,364.4 L678.7,363.6 L679.3,362.7 L679.9,361.8 L680.5,360.9 L680.9,360.1 L681.3,359.3 L681.6,358.7 L681.5,358.0ZM694.1,363.6 L693.7,364.2 L693.6,365.0 L693.6,365.9 L693.6,366.9 L693.6,368.0 L693.6,369.1 L693.7,370.3 L693.8,371.5 L693.9,372.6 L694.0,373.6 L694.2,374.6 L694.5,375.4 L694.8,376.2 L695.2,376.9 L695.7,377.5 L696.2,378.0 L696.7,378.4 L697.2,378.8 L697.8,379.1 L698.2,379.3 L698.7,379.5 L699.1,379.6 L699.4,379.6 L699.9,379.4 L700.1,379.2 L700.2,378.6 L699.9,378.3 L699.7,377.9 L699.3,377.6 L699.0,377.3 L698.6,377.0 L698.3,376.6 L697.9,376.3 L697.6,375.9 L697.4,375.5 L697.1,375.0 L696.9,374.6 L696.7,373.9 L696.5,373.1 L696.3,372.2 L696.2,371.2 L696.0,370.1 L695.9,368.9 L695.7,367.8 L695.6,366.7 L695.4,365.7 L695.2,364.9 L695.0,364.1 L694.5,363.6ZM714.1,357.9 L713.8,358.5 L713.6,359.2 L713.6,360.0 L713.5,361.0 L713.5,362.0 L713.5,363.1 L713.5,364.2 L713.4,365.3 L713.4,366.4 L713.4,367.4 L713.3,368.3 L713.2,369.1 L713.1,369.9 L712.9,370.7 L712.7,371.5 L712.4,372.4 L712.2,373.2 L711.9,374.0 L711.7,374.7 L711.4,375.4 L711.3,376.1 L711.1,376.7 L711.0,377.3 L711.2,377.8 L711.6,378.0 L712.1,377.7 L712.4,377.3 L712.7,376.7 L713.1,376.1 L713.4,375.4 L713.8,374.7 L714.1,373.9 L714.5,373.0 L714.8,372.2 L715.0,371.3 L715.2,370.4 L715.4,369.5 L715.5,368.5 L715.6,367.5 L715.6,366.4 L715.6,365.3 L715.5,364.2 L715.5,363.0 L715.4,362.0 L715.3,360.9 L715.2,360.0 L715.0,359.1 L714.9,358.4 L714.5,357.9ZM723.9,358.1 L723.6,358.6 L723.7,359.2 L723.8,359.9 L724.0,360.7 L724.3,361.5 L724.6,362.3 L724.9,363.2 L725.3,364.0 L725.6,364.7 L725.9,365.3 L726.3,365.8 L726.9,366.1 L727.1,365.9 L727.4,365.4 L727.3,364.8 L727.2,364.1 L727.0,363.3 L726.7,362.5 L726.4,361.7 L726.1,360.8 L725.7,360.0 L725.4,359.3 L725.1,358.7 L724.7,358.2 L724.1,357.9ZM678.6,379.2 L679.7,379.9 L681.1,380.4 L682.8,380.8 L684.8,381.3 L686.9,381.7 L689.2,382.1 L691.5,382.5 L693.9,382.9 L696.3,383.2 L698.6,383.4 L700.8,383.6 L702.9,383.6 L705.0,383.5 L707.1,383.3 L709.2,383.0 L711.3,382.7 L713.4,382.2 L715.4,381.8 L717.3,381.3 L719.1,380.8 L720.8,380.3 L722.2,379.8 L723.4,379.4 L724.3,378.6 L724.3,378.2 L723.1,377.8 L721.8,377.9 L720.3,378.1 L718.6,378.4 L716.8,378.7 L714.8,379.0 L712.8,379.3 L710.8,379.7 L708.7,379.9 L706.7,380.2 L704.7,380.3 L702.9,380.4 L701.0,380.4 L698.9,380.3 L696.6,380.1 L694.3,379.9 L692.0,379.6 L689.6,379.3 L687.4,379.0 L685.2,378.8 L683.2,378.6 L681.4,378.4 L679.9,378.4 L678.6,378.8ZM830.3,412.9 L830.9,413.6 L831.7,413.9 L832.8,414.2 L833.9,414.5 L835.2,414.8 L836.5,415.1 L837.9,415.3 L839.3,415.6 L840.7,415.9 L842.1,416.2 L843.4,416.4 L844.6,416.7 L845.8,417.0 L847.1,417.3 L848.5,417.7 L849.9,418.1 L851.3,418.5 L852.6,418.8 L854.0,419.2 L855.2,419.5 L856.4,419.8 L857.5,419.9 L858.4,420.0 L859.3,419.7 L859.5,419.1 L859.0,418.4 L858.2,417.9 L857.2,417.4 L856.1,416.9 L854.9,416.4 L853.6,415.9 L852.2,415.4 L850.8,414.9 L849.4,414.4 L848.1,414.0 L846.7,413.6 L845.4,413.3 L844.1,413.0 L842.7,412.7 L841.3,412.5 L839.8,412.3 L838.4,412.1 L837.0,412.0 L835.6,411.9 L834.3,411.8 L833.1,411.7 L832.1,411.8 L831.1,411.9 L830.3,412.3ZM838.8,424.8 L839.3,425.4 L840.0,425.6 L840.8,425.8 L841.7,425.9 L842.7,426.0 L843.7,426.0 L844.7,426.1 L845.8,426.2 L846.9,426.3 L847.9,426.4 L848.9,426.5 L849.8,426.6 L850.7,426.7 L851.6,426.9 L852.7,427.1 L853.7,427.4 L854.8,427.6 L855.8,427.9 L856.9,428.1 L857.9,428.3 L858.8,428.5 L859.6,428.6 L860.3,428.6 L861.0,428.2 L861.2,427.8 L860.8,427.1 L860.2,426.7 L859.4,426.3 L858.6,425.9 L857.7,425.5 L856.7,425.2 L855.6,424.8 L854.5,424.4 L853.4,424.1 L852.3,423.8 L851.3,423.6 L850.2,423.4 L849.2,423.3 L848.1,423.2 L847.0,423.2 L845.9,423.1 L844.8,423.2 L843.7,423.2 L842.7,423.3 L841.7,423.4 L840.8,423.5 L840.0,423.6 L839.4,423.8 L838.8,424.4ZM842.3,433.3 L842.6,434.0 L843.1,434.3 L843.8,434.6 L844.5,434.8 L845.3,435.1 L846.2,435.3 L847.1,435.6 L848.0,435.8 L849.0,436.0 L849.9,436.2 L850.8,436.4 L851.7,436.6 L852.6,436.7 L853.6,436.9 L854.7,437.0 L855.7,437.1 L856.8,437.2 L857.8,437.3 L858.8,437.3 L859.8,437.4 L860.7,437.4 L861.5,437.3 L862.2,437.2 L862.8,436.7 L862.8,436.3 L862.4,435.7 L861.7,435.4 L861.0,435.1 L860.1,434.9 L859.2,434.7 L858.2,434.5 L857.2,434.3 L856.1,434.1 L855.1,433.9 L854.1,433.7 L853.1,433.6 L852.3,433.4 L851.4,433.3 L850.5,433.1 L849.6,433.0 L848.6,432.8 L847.7,432.7 L846.8,432.6 L845.9,432.5 L845.0,432.4 L844.2,432.3 L843.5,432.3 L842.9,432.4 L842.3,432.9ZM849.1,445.3 L849.6,445.8 L850.2,445.9 L850.8,446.0 L851.5,446.0 L852.3,446.0 L853.2,446.0 L854.0,445.9 L854.9,445.9 L855.8,445.8 L856.7,445.7 L857.5,445.6 L858.3,445.4 L859.1,445.2 L859.9,445.0 L860.7,444.8 L861.5,444.6 L862.3,444.3 L863.1,444.0 L863.8,443.7 L864.5,443.4 L865.1,443.1 L865.7,442.8 L866.1,442.5 L866.4,441.9 L866.2,441.5 L865.7,441.1 L865.1,441.1 L864.5,441.2 L863.8,441.3 L863.1,441.4 L862.3,441.6 L861.6,441.7 L860.8,441.9 L860.0,442.1 L859.2,442.3 L858.4,442.4 L857.7,442.6 L857.0,442.7 L856.2,442.9 L855.4,443.0 L854.6,443.1 L853.7,443.3 L852.9,443.4 L852.1,443.6 L851.3,443.7 L850.6,443.9 L850.0,444.1 L849.5,444.3 L849.1,444.9ZM854.3,452.2 L854.7,452.7 L855.2,452.8 L855.8,452.9 L856.4,452.9 L857.1,452.9 L857.8,452.9 L858.6,452.9 L859.3,452.8 L860.1,452.8 L860.9,452.7 L861.6,452.5 L862.3,452.4 L863.0,452.2 L863.8,452.0 L864.5,451.8 L865.3,451.5 L866.0,451.2 L866.7,450.9 L867.4,450.6 L868.1,450.3 L868.7,450.0 L869.2,449.6 L869.6,449.3 L869.8,448.7 L869.6,448.3 L869.1,448.0 L868.6,447.9 L868.0,448.0 L867.3,448.1 L866.6,448.3 L865.9,448.5 L865.2,448.7 L864.4,448.9 L863.7,449.1 L863.0,449.3 L862.3,449.4 L861.7,449.6 L861.1,449.7 L860.4,449.9 L859.7,450.0 L859.0,450.1 L858.2,450.3 L857.5,450.4 L856.8,450.5 L856.2,450.7 L855.6,450.8 L855.0,451.0 L854.6,451.3 L854.3,451.8ZM858.0,462.2 L858.4,462.5 L858.7,462.7 L859.1,462.7 L859.6,462.7 L860.1,462.8 L860.7,462.7 L861.3,462.7 L861.9,462.6 L862.5,462.6 L863.1,462.5 L863.7,462.3 L864.3,462.2 L865.0,461.9 L865.7,461.7 L866.4,461.4 L867.1,461.1 L867.8,460.8 L868.5,460.4 L869.2,460.1 L869.9,459.7 L870.5,459.4 L871.0,459.0 L871.4,458.7 L871.6,458.2 L871.4,457.8 L870.9,457.6 L870.4,457.7 L869.8,457.8 L869.1,458.0 L868.4,458.2 L867.7,458.5 L867.0,458.7 L866.2,459.0 L865.5,459.2 L864.8,459.5 L864.2,459.7 L863.7,459.8 L863.1,460.0 L862.6,460.1 L862.0,460.3 L861.5,460.4 L860.9,460.5 L860.4,460.6 L859.9,460.8 L859.4,460.9 L858.9,461.0 L858.5,461.2 L858.2,461.4 L858.0,461.8ZM862.9,419.6 L863.5,420.0 L864.2,420.0 L865.0,419.9 L865.8,419.7 L866.7,419.5 L867.7,419.3 L868.7,419.0 L869.7,418.7 L870.7,418.4 L871.7,418.1 L872.6,417.8 L873.5,417.5 L874.4,417.2 L875.3,416.9 L876.3,416.5 L877.3,416.2 L878.3,415.8 L879.3,415.4 L880.2,415.1 L881.1,414.7 L881.9,414.3 L882.6,413.9 L883.1,413.5 L883.5,412.8 L883.3,412.4 L882.7,412.0 L882.0,412.0 L881.2,412.1 L880.3,412.3 L879.4,412.5 L878.4,412.7 L877.4,413.0 L876.4,413.3 L875.3,413.6 L874.3,413.9 L873.4,414.2 L872.5,414.5 L871.6,414.8 L870.7,415.1 L869.7,415.5 L868.7,415.8 L867.8,416.2 L866.8,416.6 L865.9,416.9 L865.0,417.3 L864.3,417.7 L863.6,418.1 L863.0,418.5 L862.7,419.2ZM866.0,426.2 L866.6,426.7 L867.3,426.8 L868.0,426.8 L868.8,426.8 L869.7,426.7 L870.6,426.6 L871.6,426.5 L872.6,426.4 L873.6,426.2 L874.6,426.0 L875.5,425.8 L876.5,425.5 L877.4,425.2 L878.3,424.9 L879.3,424.5 L880.3,424.1 L881.2,423.6 L882.2,423.2 L883.1,422.7 L883.9,422.3 L884.7,421.8 L885.3,421.4 L885.8,420.9 L886.1,420.2 L885.9,419.8 L885.2,419.5 L884.5,419.5 L883.7,419.7 L882.9,420.0 L882.0,420.2 L881.1,420.6 L880.1,420.9 L879.1,421.3 L878.2,421.6 L877.2,421.9 L876.4,422.2 L875.5,422.5 L874.7,422.7 L873.9,422.9 L872.9,423.2 L872.0,423.4 L871.1,423.6 L870.1,423.9 L869.2,424.1 L868.4,424.3 L867.6,424.6 L866.9,424.8 L866.3,425.1 L866.0,425.8ZM871.0,433.2 L871.6,433.7 L872.2,433.8 L872.8,433.8 L873.6,433.8 L874.4,433.7 L875.2,433.6 L876.1,433.5 L877.0,433.4 L877.9,433.2 L878.8,433.0 L879.7,432.8 L880.5,432.5 L881.3,432.2 L882.2,431.9 L883.1,431.5 L884.0,431.1 L884.8,430.6 L885.7,430.2 L886.5,429.7 L887.2,429.2 L887.9,428.8 L888.5,428.4 L888.9,427.9 L889.1,427.2 L888.9,426.8 L888.2,426.5 L887.6,426.6 L886.9,426.7 L886.1,427.0 L885.3,427.3 L884.5,427.6 L883.6,427.9 L882.7,428.3 L881.9,428.6 L881.0,428.9 L880.2,429.2 L879.5,429.5 L878.8,429.7 L878.0,429.9 L877.2,430.2 L876.3,430.4 L875.5,430.6 L874.7,430.9 L873.9,431.1 L873.1,431.3 L872.4,431.6 L871.8,431.8 L871.3,432.1 L871.0,432.8ZM878.1,441.2 L878.5,441.6 L879.1,441.7 L879.7,441.7 L880.3,441.6 L881.0,441.5 L881.8,441.4 L882.6,441.3 L883.4,441.1 L884.2,441.0 L884.9,440.8 L885.7,440.6 L886.4,440.4 L887.1,440.1 L887.9,439.9 L888.7,439.6 L889.4,439.2 L890.2,438.9 L891.0,438.6 L891.7,438.2 L892.3,437.9 L892.9,437.5 L893.5,437.2 L893.9,436.8 L894.1,436.2 L893.9,435.8 L893.4,435.5 L892.8,435.5 L892.2,435.6 L891.5,435.8 L890.8,436.0 L890.0,436.2 L889.3,436.4 L888.5,436.7 L887.7,436.9 L887.0,437.2 L886.2,437.4 L885.6,437.6 L884.9,437.8 L884.2,438.0 L883.5,438.3 L882.7,438.5 L881.9,438.7 L881.2,438.9 L880.5,439.2 L879.8,439.4 L879.2,439.7 L878.7,439.9 L878.2,440.2 L877.9,440.8ZM889.1,449.2 L889.5,449.5 L889.9,449.6 L890.4,449.5 L890.9,449.5 L891.4,449.4 L892.0,449.3 L892.6,449.1 L893.2,449.0 L893.8,448.8 L894.4,448.6 L895.0,448.4 L895.5,448.2 L896.0,447.9 L896.6,447.6 L897.1,447.3 L897.6,447.0 L898.0,446.7 L898.5,446.3 L898.9,446.0 L899.3,445.7 L899.6,445.3 L899.9,445.0 L900.1,444.7 L900.1,444.2 L899.9,443.8 L899.4,443.6 L899.0,443.7 L898.6,443.8 L898.2,444.0 L897.7,444.2 L897.3,444.4 L896.8,444.7 L896.3,444.9 L895.8,445.2 L895.3,445.4 L894.9,445.6 L894.5,445.8 L894.0,446.0 L893.5,446.2 L893.0,446.4 L892.5,446.7 L891.9,446.9 L891.4,447.1 L890.8,447.3 L890.3,447.6 L889.8,447.8 L889.4,448.0 L889.1,448.3 L888.9,448.8ZM895.1,457.2 L895.5,457.6 L896.0,457.6 L896.5,457.5 L897.1,457.4 L897.7,457.3 L898.4,457.1 L899.0,456.8 L899.6,456.6 L900.1,456.3 L900.6,456.1 L900.9,455.8 L901.1,455.2 L900.9,454.8 L900.5,454.4 L900.0,454.4 L899.5,454.5 L898.9,454.6 L898.3,454.7 L897.6,454.9 L897.0,455.2 L896.4,455.4 L895.9,455.7 L895.4,455.9 L895.1,456.2 L894.9,456.8ZM899.0,312.6 L899.2,313.5 L899.5,313.8 L899.9,314.1 L900.4,314.2 L900.9,314.3 L901.4,314.4 L901.9,314.4 L902.4,314.3 L902.9,314.2 L903.3,314.1 L903.7,313.8 L904.0,312.9 L904.0,312.3 L903.8,311.4 L903.5,311.1 L903.1,310.8 L902.6,310.7 L902.1,310.6 L901.6,310.5 L901.1,310.5 L900.6,310.6 L900.1,310.7 L899.7,310.8 L899.3,311.1 L899.0,312.0ZM851.8,352.5 L851.7,351.6 L851.2,350.7 L850.4,349.8 L849.6,348.8 L848.6,347.7 L847.6,346.7 L846.5,345.6 L845.5,344.6 L844.5,343.7 L843.6,343.0 L842.7,342.4 L841.8,342.3 L841.6,342.5 L841.7,343.4 L842.2,344.3 L843.0,345.2 L843.8,346.2 L844.8,347.3 L845.8,348.3 L846.9,349.4 L847.9,350.4 L848.9,351.3 L849.8,352.0 L850.7,352.6 L851.6,352.7ZM854.4,348.5 L854.3,347.6 L853.8,346.7 L853.0,345.8 L852.2,344.8 L851.2,343.7 L850.2,342.7 L849.1,341.6 L848.1,340.6 L847.1,339.7 L846.2,339.0 L845.3,338.4 L844.4,338.3 L844.2,338.5 L844.3,339.4 L844.8,340.3 L845.6,341.2 L846.4,342.2 L847.4,343.3 L848.4,344.3 L849.5,345.4 L850.5,346.4 L851.5,347.3 L852.4,348.0 L853.3,348.6 L854.2,348.7ZM856.6,345.2 L856.6,344.3 L856.2,343.4 L855.6,342.4 L854.8,341.3 L854.0,340.1 L853.1,338.9 L852.2,337.8 L851.3,336.7 L850.4,335.6 L849.6,334.8 L848.8,334.1 L847.9,333.9 L847.7,334.1 L847.7,335.0 L848.1,335.9 L848.7,336.9 L849.5,338.0 L850.3,339.2 L851.2,340.4 L852.1,341.5 L853.0,342.6 L853.9,343.7 L854.7,344.5 L855.5,345.2 L856.4,345.4ZM859.7,341.6 L859.7,340.7 L859.3,339.8 L858.7,338.7 L857.9,337.6 L857.1,336.5 L856.2,335.3 L855.3,334.1 L854.4,333.0 L853.5,332.0 L852.7,331.1 L851.9,330.4 L851.0,330.2 L850.8,330.4 L850.8,331.3 L851.2,332.2 L851.8,333.3 L852.6,334.4 L853.4,335.5 L854.3,336.7 L855.2,337.9 L856.1,339.0 L857.0,340.0 L857.8,340.9 L858.6,341.6 L859.5,341.8ZM862.8,338.0 L862.9,337.1 L862.4,336.2 L861.8,335.1 L861.1,334.0 L860.2,332.9 L859.4,331.7 L858.5,330.5 L857.6,329.4 L856.7,328.4 L855.9,327.5 L855.1,326.8 L854.2,326.6 L854.0,326.8 L853.9,327.7 L854.4,328.6 L855.0,329.7 L855.7,330.8 L856.6,331.9 L857.4,333.1 L858.3,334.3 L859.2,335.4 L860.1,336.4 L860.9,337.3 L861.7,338.0 L862.6,338.2ZM866.0,334.3 L866.0,333.4 L865.6,332.5 L865.0,331.4 L864.2,330.3 L863.4,329.2 L862.5,328.0 L861.6,326.8 L860.7,325.7 L859.8,324.7 L859.0,323.8 L858.2,323.1 L857.3,322.9 L857.1,323.1 L857.1,324.0 L857.5,324.9 L858.1,326.0 L858.9,327.1 L859.7,328.2 L860.6,329.4 L861.5,330.6 L862.4,331.7 L863.3,332.7 L864.1,333.6 L864.9,334.3 L865.8,334.5ZM869.1,330.7 L869.1,329.8 L868.7,328.9 L868.1,327.8 L867.3,326.7 L866.5,325.6 L865.6,324.4 L864.7,323.2 L863.8,322.1 L862.9,321.1 L862.1,320.2 L861.3,319.5 L860.4,319.3 L860.2,319.5 L860.2,320.4 L860.6,321.3 L861.2,322.4 L862.0,323.5 L862.8,324.6 L863.7,325.8 L864.6,327.0 L865.5,328.1 L866.4,329.1 L867.2,330.0 L868.0,330.7 L868.9,330.9ZM872.2,327.0 L872.2,326.1 L871.8,325.2 L871.2,324.1 L870.4,323.0 L869.6,321.9 L868.7,320.7 L867.8,319.5 L866.9,318.4 L866.0,317.4 L865.2,316.5 L864.4,315.8 L863.5,315.6 L863.3,315.8 L863.3,316.7 L863.7,317.6 L864.3,318.7 L865.1,319.8 L865.9,320.9 L866.8,322.1 L867.7,323.3 L868.6,324.4 L869.5,325.4 L870.3,326.3 L871.1,327.0 L872.0,327.2ZM874.4,324.8 L874.6,323.9 L874.4,322.9 L874.0,321.8 L873.6,320.5 L873.0,319.2 L872.5,317.8 L871.8,316.5 L871.2,315.2 L870.6,314.0 L870.1,312.9 L869.5,312.1 L868.7,311.6 L868.3,311.8 L868.1,312.7 L868.3,313.7 L868.7,314.8 L869.1,316.1 L869.7,317.4 L870.2,318.8 L870.9,320.1 L871.5,321.4 L872.1,322.6 L872.6,323.7 L873.2,324.5 L874.0,325.0ZM878.3,322.0 L878.5,321.1 L878.3,320.1 L877.9,319.0 L877.5,317.7 L876.9,316.4 L876.4,315.0 L875.7,313.7 L875.1,312.4 L874.5,311.2 L874.0,310.1 L873.4,309.3 L872.6,308.8 L872.2,309.0 L872.0,309.9 L872.2,310.9 L872.6,312.0 L873.0,313.3 L873.6,314.6 L874.1,316.0 L874.8,317.3 L875.4,318.6 L876.0,319.8 L876.5,320.9 L877.1,321.7 L877.9,322.2ZM880.9,320.7 L881.3,319.9 L881.4,318.9 L881.3,317.7 L881.2,316.3 L881.0,314.9 L880.8,313.4 L880.6,312.0 L880.4,310.5 L880.1,309.2 L879.8,308.1 L879.4,307.1 L878.8,306.5 L878.4,306.5 L878.0,307.3 L877.9,308.3 L878.0,309.5 L878.1,310.9 L878.3,312.3 L878.5,313.8 L878.7,315.2 L878.9,316.7 L879.2,318.0 L879.5,319.1 L879.9,320.1 L880.5,320.7ZM883.3,319.1 L883.9,318.5 L884.3,317.5 L884.6,316.4 L884.9,315.1 L885.1,313.6 L885.3,312.2 L885.5,310.7 L885.7,309.3 L885.8,307.9 L885.9,306.7 L885.8,305.7 L885.4,304.9 L885.0,304.9 L884.4,305.5 L884.0,306.5 L883.7,307.6 L883.4,308.9 L883.2,310.4 L883.0,311.8 L882.8,313.3 L882.6,314.7 L882.5,316.1 L882.4,317.3 L882.5,318.3 L882.9,319.1ZM888.1,318.8 L888.7,318.2 L889.1,317.2 L889.4,316.1 L889.7,314.8 L889.9,313.3 L890.1,311.9 L890.3,310.4 L890.5,309.0 L890.6,307.6 L890.7,306.4 L890.6,305.4 L890.2,304.6 L889.8,304.6 L889.2,305.2 L888.8,306.2 L888.5,307.3 L888.2,308.6 L888.0,310.1 L887.8,311.5 L887.6,313.0 L887.4,314.4 L887.3,315.8 L887.2,317.0 L887.3,318.0 L887.7,318.8ZM892.0,318.6 L892.7,318.0 L893.2,317.1 L893.6,316.0 L894.1,314.8 L894.5,313.4 L895.0,312.0 L895.4,310.6 L895.7,309.2 L896.0,307.9 L896.2,306.7 L896.3,305.7 L896.0,304.9 L895.6,304.7 L894.9,305.3 L894.4,306.2 L894.0,307.3 L893.5,308.5 L893.1,309.9 L892.6,311.3 L892.2,312.7 L891.9,314.1 L891.6,315.4 L891.4,316.6 L891.3,317.6 L891.6,318.4ZM896.8,318.8 L897.5,318.3 L898.0,317.4 L898.4,316.3 L898.9,315.1 L899.3,313.7 L899.7,312.3 L900.1,310.9 L900.4,309.5 L900.7,308.2 L900.9,307.0 L901.0,306.0 L900.7,305.1 L900.3,305.1 L899.6,305.6 L899.1,306.5 L898.7,307.6 L898.2,308.8 L897.8,310.2 L897.4,311.6 L897.0,313.0 L896.7,314.4 L896.4,315.7 L896.2,316.9 L896.1,317.9 L896.4,318.8ZM644.9,309.2 L645.1,309.7 L645.6,310.1 L646.1,310.5 L646.7,310.8 L647.4,311.2 L648.1,311.6 L648.8,312.0 L649.6,312.4 L650.3,312.8 L651.0,313.2 L651.6,313.7 L652.2,314.1 L652.8,314.6 L653.4,315.1 L654.0,315.5 L654.5,316.0 L655.1,316.6 L655.7,317.1 L656.2,317.7 L656.8,318.2 L657.3,318.8 L657.9,319.4 L658.4,320.1 L658.9,320.8 L659.3,321.5 L659.8,322.3 L660.4,323.3 L660.9,324.3 L661.4,325.3 L661.9,326.4 L662.4,327.4 L662.9,328.4 L663.3,329.3 L663.8,330.0 L664.2,330.7 L664.8,331.1 L665.2,330.9 L665.3,330.2 L665.2,329.5 L665.0,328.6 L664.7,327.6 L664.4,326.6 L664.0,325.5 L663.6,324.4 L663.1,323.3 L662.7,322.2 L662.2,321.1 L661.7,320.1 L661.1,319.2 L660.6,318.5 L660.1,317.7 L659.5,317.0 L658.9,316.3 L658.3,315.6 L657.7,315.0 L657.1,314.4 L656.4,313.9 L655.8,313.3 L655.1,312.8 L654.5,312.4 L653.8,311.9 L653.1,311.4 L652.3,311.0 L651.5,310.6 L650.7,310.2 L649.8,309.8 L649.0,309.5 L648.2,309.3 L647.5,309.0 L646.8,308.8 L646.2,308.7 L645.6,308.6 L645.1,308.8ZM640.0,332.1 L640.3,332.6 L640.9,333.0 L641.6,333.3 L642.4,333.6 L643.3,333.9 L644.2,334.3 L645.2,334.6 L646.2,334.9 L647.1,335.2 L648.0,335.5 L648.9,335.8 L649.7,336.0 L650.5,336.2 L651.3,336.4 L652.1,336.6 L652.9,336.8 L653.7,336.9 L654.4,337.1 L655.1,337.2 L655.8,337.3 L656.4,337.4 L657.0,337.4 L657.5,337.4 L658.0,337.2 L658.0,336.8 L657.7,336.4 L657.3,336.2 L656.8,335.9 L656.2,335.7 L655.5,335.5 L654.8,335.3 L654.1,335.1 L653.4,334.9 L652.6,334.6 L651.8,334.4 L651.0,334.2 L650.3,334.0 L649.5,333.8 L648.6,333.5 L647.7,333.3 L646.7,333.0 L645.7,332.8 L644.8,332.5 L643.8,332.3 L642.9,332.0 L642.1,331.9 L641.3,331.7 L640.6,331.7 L640.0,331.9ZM647.0,330.1 L647.2,330.4 L647.6,330.6 L648.0,330.7 L648.4,330.9 L648.9,331.0 L649.4,331.1 L650.0,331.3 L650.6,331.4 L651.2,331.5 L651.7,331.6 L652.3,331.7 L652.9,331.8 L653.5,331.9 L654.1,332.0 L654.7,332.0 L655.4,332.1 L656.1,332.2 L656.8,332.3 L657.4,332.3 L658.1,332.4 L658.6,332.4 L659.2,332.4 L659.6,332.3 L660.0,332.1 L660.0,331.9 L659.7,331.6 L659.3,331.4 L658.8,331.3 L658.2,331.1 L657.6,331.0 L657.0,330.9 L656.3,330.7 L655.6,330.6 L655.0,330.5 L654.3,330.4 L653.7,330.3 L653.1,330.2 L652.6,330.1 L652.0,330.0 L651.4,330.0 L650.8,329.9 L650.2,329.8 L649.7,329.7 L649.1,329.7 L648.6,329.6 L648.2,329.6 L647.7,329.6 L647.4,329.7 L647.0,329.9ZM662.8,328.1 L662.7,328.8 L662.8,329.6 L663.0,330.5 L663.3,331.5 L663.6,332.6 L664.0,333.7 L664.4,334.9 L664.7,336.0 L665.1,337.2 L665.4,338.3 L665.7,339.3 L665.9,340.2 L666.1,341.1 L666.3,342.1 L666.4,343.0 L666.5,344.0 L666.7,344.9 L666.8,345.8 L666.9,346.7 L667.0,347.5 L667.1,348.3 L667.2,349.0 L667.4,349.6 L667.8,350.0 L668.2,350.0 L668.5,349.5 L668.6,348.9 L668.7,348.2 L668.7,347.4 L668.7,346.6 L668.7,345.7 L668.7,344.7 L668.7,343.7 L668.6,342.7 L668.4,341.7 L668.3,340.7 L668.1,339.8 L667.8,338.7 L667.5,337.7 L667.2,336.5 L666.8,335.4 L666.3,334.2 L665.9,333.0 L665.4,331.9 L665.0,330.9 L664.5,329.9 L664.1,329.1 L663.7,328.4 L663.2,327.9ZM681.8,305.1 L681.4,306.1 L681.5,307.4 L681.8,308.8 L682.0,310.3 L682.4,312.0 L682.7,313.8 L683.1,315.6 L683.5,317.5 L683.8,319.4 L684.1,321.4 L684.3,323.2 L684.4,325.1 L684.4,327.0 L684.4,329.1 L684.3,331.4 L684.2,333.8 L684.0,336.2 L683.8,338.6 L683.7,341.0 L683.5,343.2 L683.4,345.3 L683.3,347.1 L683.3,348.7 L683.8,350.0 L684.2,350.0 L684.9,348.9 L685.3,347.3 L685.6,345.5 L686.0,343.5 L686.3,341.3 L686.7,338.9 L687.0,336.5 L687.2,334.0 L687.4,331.6 L687.6,329.2 L687.6,327.0 L687.6,324.9 L687.5,322.9 L687.2,320.9 L686.9,318.9 L686.5,316.9 L686.0,315.0 L685.5,313.1 L685.0,311.3 L684.5,309.7 L684.0,308.2 L683.5,306.9 L683.0,305.8 L682.2,304.9ZM637.9,315.1 L637.9,315.6 L638.1,315.9 L638.4,316.2 L638.7,316.5 L639.1,316.8 L639.5,317.1 L639.9,317.4 L640.4,317.7 L640.8,318.0 L641.1,318.1 L641.5,318.2 L641.9,318.1 L642.1,317.9 L642.1,317.4 L641.9,317.1 L641.6,316.8 L641.3,316.5 L640.9,316.2 L640.5,315.9 L640.1,315.6 L639.6,315.3 L639.2,315.0 L638.9,314.9 L638.5,314.8 L638.1,314.9ZM750.4,375.1 L749.3,375.3 L748.9,375.8 L748.5,376.4 L748.2,377.2 L747.9,378.0 L747.6,378.8 L747.4,379.7 L747.3,380.6 L747.2,381.4 L747.3,382.1 L747.5,382.8 L748.3,383.4 L748.9,383.6 L750.0,383.4 L750.4,382.9 L750.8,382.3 L751.1,381.5 L751.4,380.7 L751.7,379.9 L751.9,379.0 L752.0,378.1 L752.1,377.3 L752.0,376.6 L751.8,375.9 L751.0,375.3ZM763.9,369.9 L762.8,370.4 L762.2,371.2 L761.8,372.3 L761.3,373.5 L760.9,374.9 L760.6,376.3 L760.3,377.7 L760.0,379.0 L759.9,380.3 L759.8,381.5 L759.9,382.5 L760.7,383.4 L761.3,383.6 L762.4,383.1 L763.0,382.3 L763.4,381.2 L763.9,380.0 L764.3,378.6 L764.6,377.2 L764.9,375.8 L765.2,374.5 L765.3,373.2 L765.4,372.0 L765.3,371.0 L764.5,370.1ZM775.1,375.1 L774.1,375.4 L773.6,376.0 L773.0,376.8 L772.6,377.7 L772.1,378.7 L771.6,379.7 L771.2,380.8 L770.7,381.9 L770.3,382.9 L769.9,383.9 L769.5,384.7 L769.1,385.5 L768.8,386.1 L768.4,386.8 L768.0,387.5 L767.6,388.2 L767.2,388.8 L766.8,389.5 L766.4,390.2 L766.0,390.8 L765.8,391.4 L765.5,392.1 L765.5,392.7 L765.9,393.6 L766.5,394.0 L767.4,394.2 L768.0,394.1 L768.6,393.8 L769.1,393.4 L769.7,392.9 L770.3,392.3 L770.9,391.7 L771.5,391.0 L772.1,390.3 L772.7,389.5 L773.2,388.6 L773.7,387.7 L774.1,386.8 L774.5,385.8 L774.9,384.7 L775.3,383.5 L775.6,382.3 L775.9,381.2 L776.2,380.0 L776.4,378.9 L776.5,377.9 L776.6,377.0 L776.5,376.2 L775.9,375.3ZM787.7,369.9 L786.9,370.3 L786.5,370.9 L786.2,371.6 L786.0,372.5 L785.7,373.3 L785.5,374.2 L785.2,375.2 L785.0,376.2 L784.7,377.1 L784.5,378.0 L784.2,378.9 L783.9,379.7 L783.6,380.5 L783.3,381.4 L782.9,382.3 L782.4,383.3 L782.0,384.3 L781.5,385.3 L781.1,386.3 L780.7,387.2 L780.4,388.1 L780.2,389.0 L780.1,389.7 L780.4,390.6 L781.0,390.8 L781.9,390.7 L782.4,390.2 L783.0,389.6 L783.6,388.8 L784.2,388.0 L784.8,387.1 L785.4,386.1 L786.0,385.1 L786.5,384.1 L787.0,383.1 L787.5,382.1 L787.9,381.1 L788.2,380.1 L788.4,379.1 L788.7,378.0 L788.8,376.9 L789.0,375.9 L789.1,374.9 L789.2,373.9 L789.2,372.9 L789.2,372.1 L789.1,371.3 L788.9,370.7 L788.3,370.1ZM797.0,380.3 L795.9,380.4 L795.3,381.0 L794.7,381.8 L794.2,382.7 L793.7,383.7 L793.3,384.8 L792.9,385.8 L792.5,386.9 L792.2,387.9 L792.1,388.8 L792.1,389.7 L792.8,390.6 L793.4,390.8 L794.5,390.7 L795.1,390.1 L795.7,389.3 L796.2,388.4 L796.7,387.4 L797.1,386.3 L797.5,385.3 L797.9,384.2 L798.2,383.2 L798.3,382.3 L798.3,381.4 L797.6,380.5ZM808.4,370.0 L807.7,370.8 L807.4,371.8 L807.3,373.0 L807.1,374.3 L807.1,375.8 L807.0,377.3 L806.9,378.8 L806.9,380.3 L806.8,381.7 L806.8,383.1 L806.7,384.3 L806.6,385.3 L806.5,386.2 L806.4,387.0 L806.3,387.8 L806.2,388.6 L806.0,389.4 L805.9,390.1 L805.8,390.7 L805.7,391.4 L805.6,392.0 L805.6,392.6 L805.7,393.1 L806.3,393.7 L806.9,393.9 L807.7,393.7 L808.1,393.4 L808.4,393.0 L808.8,392.4 L809.1,391.8 L809.4,391.2 L809.7,390.4 L810.0,389.6 L810.3,388.7 L810.5,387.8 L810.6,386.7 L810.8,385.7 L810.8,384.5 L810.9,383.2 L810.9,381.8 L810.8,380.3 L810.8,378.8 L810.7,377.2 L810.6,375.7 L810.4,374.3 L810.2,372.9 L810.0,371.7 L809.7,370.8 L809.0,370.0ZM819.8,372.0 L819.2,372.6 L818.9,373.5 L818.7,374.5 L818.6,375.6 L818.4,376.9 L818.3,378.2 L818.1,379.5 L818.0,380.8 L817.9,382.0 L817.7,383.2 L817.6,384.3 L817.4,385.2 L817.3,386.0 L817.1,386.9 L816.8,387.7 L816.6,388.4 L816.4,389.2 L816.1,389.9 L815.9,390.7 L815.7,391.3 L815.5,392.0 L815.4,392.6 L815.4,393.1 L815.8,393.7 L816.2,393.9 L816.9,393.7 L817.3,393.4 L817.6,392.9 L818.0,392.4 L818.4,391.7 L818.7,391.0 L819.1,390.3 L819.5,389.5 L819.8,388.6 L820.1,387.7 L820.4,386.8 L820.6,385.8 L820.7,384.7 L820.9,383.6 L821.0,382.3 L821.0,381.0 L821.1,379.7 L821.1,378.3 L821.1,377.0 L821.1,375.8 L821.0,374.6 L820.9,373.6 L820.7,372.7 L820.2,372.0Z"/>
<path d="M661.0,300.0 C662.2,299.0 668.3,302.3 670.0,304.0 C671.7,305.7 672.2,309.0 671.0,310.0 C669.8,311.0 664.7,311.7 663.0,310.0 C661.3,308.3 659.8,301.0 661.0,300.0 Z" fill="#169410"/>
<path d="M650.0,296.0 C650.8,294.5 654.7,294.5 656.0,296.0 C657.3,297.5 658.8,303.5 658.0,305.0 C657.2,306.5 652.3,306.5 651.0,305.0 C649.7,303.5 649.2,297.5 650.0,296.0 Z" fill="#30c020"/>
<circle cx="643.6" cy="325.3" r="1.6" fill="#60e050"/>
<path d="M645.0,343.0 C647.0,341.8 655.8,343.5 658.0,345.0 C660.2,346.5 660.0,350.8 658.0,352.0 C656.0,353.2 648.2,353.5 646.0,352.0 C643.8,350.5 643.0,344.2 645.0,343.0 Z" fill="#169410"/>

</g>
<g fill="none" stroke="#d0f0d0" stroke-width="0.6" opacity="0.8"><path d="M638.0,356.0 L620.0,366.0"/><path d="M640.0,358.0 L622.0,370.0"/><path d="M642.0,360.0 L626.0,372.0"/><path d="M639.0,357.0 L618.0,362.0"/><path d="M644.0,361.0 L630.0,373.0"/>
</g>
</g>
<g clip-path="url(#clipR)">
<g clip-path="url(#clipImg)">
<rect x="520" y="227" width="446" height="280" fill="#fff"/>
<g fill="#f4f4f4"><rect x="520" y="227" width="32" height="32"/><rect x="584" y="227" width="32" height="32"/><rect x="648" y="227" width="32" height="32"/><rect x="712" y="227" width="32" height="32"/><rect x="776" y="227" width="32" height="32"/><rect x="840" y="227" width="32" height="32"/><rect x="904" y="227" width="32" height="32"/><rect x="552" y="259" width="32" height="32"/><rect x="616" y="259" width="32" height="32"/><rect x="680" y="259" width="32" height="32"/><rect x="744" y="259" width="32" height="32"/><rect x="808" y="259" width="32" height="32"/><rect x="872" y="259" width="32" height="32"/><rect x="936" y="259" width="32" height="32"/><rect x="520" y="291" width="32" height="32"/><rect x="584" y="291" width="32" height="32"/><rect x="648" y="291" width="32" height="32"/><rect x="712" y="291" width="32" height="32"/><rect x="776" y="291" width="32" height="32"/><rect x="840" y="291" width="32" height="32"/><rect x="904" y="291" width="32" height="32"/><rect x="552" y="323" width="32" height="32"/><rect x="616" y="323" width="32" height="32"/><rect x="680" y="323" width="32" height="32"/><rect x="744" y="323" width="32" height="32"/><rect x="808" y="323" width="32" height="32"/><rect x="872" y="323" width="32" height="32"/><rect x="936" y="323" width="32" height="32"/><rect x="520" y="355" width="32" height="32"/><rect x="584" y="355" width="32" height="32"/><rect x="648" y="355" width="32" height="32"/><rect x="712" y="355" width="32" height="32"/><rect x="776" y="355" width="32" height="32"/><rect x="840" y="355" width="32" height="32"/><rect x="904" y="355" width="32" height="32"/><rect x="552" y="387" width="32" height="32"/><rect x="616" y="387" width="32" height="32"/><rect x="680" y="387" width="32" height="32"/><rect x="744" y="387" width="32" height="32"/><rect x="808" y="387" width="32" height="32"/><rect x="872" y="387" width="32" height="32"/><rect x="936" y="387" width="32" height="32"/><rect x="520" y="419" width="32" height="32"/><rect x="584" y="419" width="32" height="32"/><rect x="648" y="419" width="32" height="32"/><rect x="712" y="419" width="32" height="32"/><rect x="776" y="419" width="32" height="32"/><rect x="840" y="419" width="32" height="32"/><rect x="904" y="419" width="32" height="32"/><rect x="552" y="451" width="32" height="32"/><rect x="616" y="451" width="32" height="32"/><rect x="680" y="451" width="32" height="32"/><rect x="744" y="451" width="32" height="32"/><rect x="808" y="451" width="32" height="32"/><rect x="872" y="451" width="32" height="32"/><rect x="936" y="451" width="32" height="32"/><rect x="520" y="483" width="32" height="32"/><rect x="584" y="483" width="32" height="32"/><rect x="648" y="483" width="32" height="32"/><rect x="712" y="483" width="32" height="32"/><rect x="776" y="483" width="32" height="32"/><rect x="840" y="483" width="32" height="32"/><rect x="904" y="483" width="32" height="32"/></g>
</g>
<use href="#tg" fill="url(#orange)"/>
<g clip-path="url(#tclip)">
<path d="M648.0,353.0 C651.7,350.8 661.0,350.8 668.0,349.0 C675.0,347.2 684.3,342.5 690.0,342.0 C695.7,341.5 703.3,344.0 702.0,346.0 C700.7,348.0 688.7,351.7 682.0,354.0 C675.3,356.3 668.0,358.7 662.0,360.0 C656.0,361.3 648.3,363.2 646.0,362.0 C643.7,360.8 644.3,355.2 648.0,353.0 Z" fill="#4a3018"/>
<path d="M611.0,380.0 C611.0,376.5 613.5,374.0 617.0,372.0 C620.5,370.0 627.3,369.2 632.0,368.0 C636.7,366.8 640.3,366.3 645.0,365.0 C649.7,363.7 654.2,361.8 660.0,360.0 C665.8,358.2 672.7,355.8 680.0,354.0 C687.3,352.2 696.3,349.2 704.0,349.0 C711.7,348.8 721.3,350.3 726.0,353.0 C730.7,355.7 732.7,360.8 732.0,365.0 C731.3,369.2 727.3,374.8 722.0,378.0 C716.7,381.2 707.0,382.0 700.0,384.0 C693.0,386.0 687.5,388.8 680.0,390.0 C672.5,391.2 662.5,390.3 655.0,391.0 C647.5,391.7 641.3,393.7 635.0,394.0 C628.7,394.3 621.0,395.3 617.0,393.0 C613.0,390.7 611.0,383.5 611.0,380.0 Z" fill="#cc8e4c"/>
<path d="M836.0,354.0 C834.3,351.0 841.7,343.7 846.0,338.0 C850.3,332.3 856.0,325.0 862.0,320.0 C868.0,315.0 874.3,309.5 882.0,308.0 C889.7,306.5 904.3,309.5 908.0,311.0 C911.7,312.5 907.7,316.2 904.0,317.0 C900.3,317.8 891.3,314.2 886.0,316.0 C880.7,317.8 876.3,323.0 872.0,328.0 C867.7,333.0 862.7,341.3 860.0,346.0 C857.3,350.7 860.0,354.7 856.0,356.0 C852.0,357.3 837.7,357.0 836.0,354.0 Z" fill="#c49458"/>
<path d="M610.0,381.0 C610.8,378.2 613.2,374.0 616.0,372.0 C618.8,370.0 624.2,368.0 627.0,369.0 C629.8,370.0 632.5,374.7 633.0,378.0 C633.5,381.3 632.2,386.5 630.0,389.0 C627.8,391.5 623.2,393.0 620.0,393.0 C616.8,393.0 612.7,391.0 611.0,389.0 C609.3,387.0 609.2,383.8 610.0,381.0 Z" fill="#b87a40"/>
<path d="M631.0,377.0 C633.2,373.2 639.8,370.8 645.0,369.0 C650.2,367.2 657.5,365.3 662.0,366.0 C666.5,366.7 671.0,369.7 672.0,373.0 C673.0,376.3 670.8,382.8 668.0,386.0 C665.2,389.2 659.5,390.3 655.0,392.0 C650.5,393.7 644.8,396.0 641.0,396.0 C637.2,396.0 633.7,395.2 632.0,392.0 C630.3,388.8 628.8,380.8 631.0,377.0 Z" fill="#d89a58"/>
<path d="M652.0,354.0 C653.7,352.2 661.5,350.5 664.0,351.0 C666.5,351.5 667.3,355.2 667.0,357.0 C666.7,358.8 664.2,361.2 662.0,362.0 C659.8,362.8 655.7,363.3 654.0,362.0 C652.3,360.7 650.3,355.8 652.0,354.0 Z" fill="#9aaedc" opacity="0.75"/>
<ellipse cx="614.5" cy="377.5" rx="1.6" ry="1.2" fill="#17100a"/><ellipse cx="613" cy="384" rx="1.3" ry="1.7" fill="#17100a"/><ellipse cx="618.5" cy="389.5" rx="1.8" ry="1.2" fill="#17100a"/><ellipse cx="622" cy="383" rx="2.4" ry="2.2" fill="#17100a"/>
<path d="M735.0,386.0 C738.3,385.7 750.8,388.7 760.0,390.0 C769.2,391.3 780.0,392.7 790.0,394.0 C800.0,395.3 812.0,396.3 820.0,398.0 C828.0,399.7 832.7,400.7 838.0,404.0 C843.3,407.3 851.7,416.7 852.0,418.0 C852.3,419.3 846.2,414.7 840.0,412.0 C833.8,409.3 825.0,404.0 815.0,402.0 C805.0,400.0 789.2,400.8 780.0,400.0 C770.8,399.2 766.7,398.3 760.0,397.0 C753.3,395.7 744.2,393.8 740.0,392.0 C735.8,390.2 731.7,386.3 735.0,386.0 Z" fill="#5a3a20" opacity="0.6"/>
<path d="M740.0,388.0 C742.7,388.2 754.0,395.0 761.0,396.0 C768.0,397.0 774.9,394.3 781.8,394.0 C788.7,393.7 795.6,393.2 802.5,394.0 C809.4,394.8 816.3,397.2 823.2,399.0 C830.1,400.8 838.1,401.8 843.9,405.0 C849.7,408.2 857.0,415.5 858.0,418.0 C859.0,420.5 853.8,421.3 850.0,420.0 C846.2,418.7 840.8,412.8 835.0,410.0 C829.2,407.2 822.5,404.7 815.0,403.0 C807.5,401.3 798.3,400.5 790.0,400.0 C781.7,399.5 772.5,400.8 765.0,400.0 C757.5,399.2 749.2,397.0 745.0,395.0 C740.8,393.0 737.3,387.8 740.0,388.0 Z" fill="#5a3a20" opacity="0.8"/>
<path d="M652.3,316.6 C653.8,312.5 657.7,312.7 661.0,312.9 C664.3,313.1 669.3,315.2 672.2,317.9 C675.1,320.6 677.5,325.1 678.5,329.0 C679.5,332.9 680.0,338.4 678.5,341.5 C677.0,344.6 673.3,346.9 669.8,347.7 C666.3,348.5 660.2,348.1 657.3,346.5 C654.4,344.9 653.1,342.8 652.3,337.8 C651.5,332.8 650.8,320.8 652.3,316.6 Z" fill="#dccca8"/>
<path d="M638.7,311.6 C640.2,309.1 646.1,308.3 648.6,309.1 C651.1,309.9 653.8,313.9 653.6,316.6 C653.4,319.3 649.7,324.1 647.4,325.3 C645.1,326.5 641.3,326.3 639.9,324.0 C638.5,321.7 637.2,314.1 638.7,311.6 Z" fill="#dccca8" opacity="0.8"/>
<path d="M671.0,311.0 C672.0,308.2 678.3,309.8 680.0,313.0 C681.7,316.2 681.2,324.5 681.0,330.0 C680.8,335.5 680.5,342.7 679.0,346.0 C677.5,349.3 672.8,352.7 672.0,350.0 C671.2,347.3 674.2,336.5 674.0,330.0 C673.8,323.5 670.0,313.8 671.0,311.0 Z" fill="#dccca8" opacity="0.6"/>
<path d="M629.0,357.0 C630.2,355.0 636.2,354.3 640.0,354.0 C643.8,353.7 648.5,354.3 652.0,355.0 C655.5,355.7 660.3,356.3 661.0,358.0 C661.7,359.7 658.8,363.3 656.0,365.0 C653.2,366.7 647.8,367.8 644.0,368.0 C640.2,368.2 635.5,367.8 633.0,366.0 C630.5,364.2 627.8,359.0 629.0,357.0 Z" fill="#c4d0f0" opacity="0.55"/>
<path fill="#17100a" d="M744.5,320.0 L744.0,321.2 L743.9,322.7 L744.0,324.4 L744.1,326.3 L744.2,328.3 L744.3,330.5 L744.5,332.7 L744.6,335.0 L744.7,337.2 L744.7,339.4 L744.7,341.5 L744.7,343.5 L744.5,345.5 L744.2,347.6 L743.9,349.8 L743.5,352.0 L743.1,354.3 L742.6,356.6 L742.2,358.7 L741.8,360.8 L741.4,362.7 L741.2,364.4 L741.1,365.9 L741.4,367.1 L741.8,367.3 L742.6,366.2 L743.2,364.9 L743.7,363.2 L744.3,361.4 L744.9,359.4 L745.5,357.2 L746.0,354.9 L746.6,352.6 L747.0,350.3 L747.4,348.0 L747.7,345.8 L747.9,343.7 L748.0,341.6 L748.0,339.4 L747.9,337.1 L747.7,334.8 L747.5,332.4 L747.2,330.2 L747.0,328.0 L746.6,326.0 L746.3,324.1 L746.0,322.5 L745.6,321.1 L744.9,320.0ZM757.0,326.4 L756.8,327.9 L757.3,329.6 L757.9,331.6 L758.6,333.8 L759.5,336.1 L760.4,338.6 L761.2,341.1 L762.1,343.5 L762.9,345.9 L763.6,348.1 L764.1,350.1 L764.5,351.8 L764.7,353.3 L764.8,354.7 L764.8,356.0 L764.7,357.2 L764.6,358.4 L764.4,359.5 L764.2,360.6 L763.9,361.7 L763.7,362.9 L763.4,364.1 L763.1,365.4 L762.9,366.7 L762.6,368.1 L762.3,369.5 L762.0,370.9 L761.6,372.4 L761.2,374.0 L760.9,375.5 L760.5,376.9 L760.2,378.3 L759.9,379.6 L759.7,380.8 L759.7,381.8 L760.1,382.8 L760.7,383.0 L761.6,382.5 L762.2,381.6 L762.7,380.6 L763.3,379.4 L763.9,378.0 L764.4,376.6 L765.0,375.1 L765.6,373.6 L766.1,372.1 L766.6,370.6 L767.0,369.1 L767.3,367.7 L767.6,366.4 L768.0,365.2 L768.3,364.0 L768.6,362.8 L768.9,361.6 L769.1,360.3 L769.3,358.9 L769.5,357.5 L769.5,356.0 L769.4,354.4 L769.3,352.7 L768.9,351.0 L768.4,349.0 L767.7,346.8 L766.9,344.5 L766.0,342.1 L764.9,339.6 L763.8,337.2 L762.7,334.8 L761.7,332.5 L760.6,330.4 L759.6,328.6 L758.7,327.2 L757.6,326.2ZM775.8,335.9 L775.6,337.1 L776.0,338.4 L776.6,339.9 L777.3,341.5 L778.1,343.2 L778.9,345.0 L779.8,346.9 L780.6,348.7 L781.4,350.5 L782.2,352.3 L782.8,353.9 L783.3,355.4 L783.8,356.9 L784.2,358.3 L784.6,359.7 L785.0,361.1 L785.3,362.4 L785.6,363.8 L785.9,365.1 L786.1,366.4 L786.2,367.7 L786.3,369.0 L786.3,370.3 L786.3,371.7 L786.1,373.1 L785.9,374.6 L785.5,376.3 L785.0,378.1 L784.4,379.9 L783.9,381.7 L783.3,383.4 L782.8,385.1 L782.3,386.7 L781.9,388.1 L781.7,389.4 L782.0,390.6 L782.8,390.8 L783.7,390.2 L784.5,389.2 L785.2,387.9 L786.0,386.4 L786.8,384.8 L787.6,383.1 L788.4,381.3 L789.1,379.4 L789.8,377.6 L790.4,375.7 L790.8,373.9 L791.1,372.1 L791.3,370.5 L791.3,368.9 L791.2,367.3 L791.1,365.8 L790.9,364.3 L790.6,362.7 L790.3,361.2 L789.9,359.8 L789.5,358.3 L789.0,356.8 L788.4,355.3 L787.9,353.8 L787.2,352.1 L786.4,350.4 L785.5,348.6 L784.5,346.7 L783.5,344.9 L782.4,343.1 L781.4,341.4 L780.3,339.8 L779.3,338.4 L778.4,337.1 L777.5,336.1 L776.4,335.5ZM791.6,340.6 L791.5,341.8 L792.0,343.1 L792.7,344.4 L793.5,345.9 L794.4,347.4 L795.3,349.1 L796.3,350.8 L797.3,352.5 L798.3,354.1 L799.2,355.8 L800.0,357.3 L800.7,358.8 L801.4,360.2 L802.1,361.7 L802.7,363.1 L803.3,364.5 L803.9,366.0 L804.5,367.4 L805.0,368.8 L805.4,370.1 L805.9,371.5 L806.2,372.8 L806.5,374.1 L806.8,375.3 L807.0,376.6 L807.0,377.9 L807.1,379.3 L807.0,380.7 L806.9,382.2 L806.8,383.6 L806.7,385.0 L806.6,386.4 L806.5,387.6 L806.5,388.8 L806.6,389.8 L807.2,390.6 L808.0,390.8 L808.8,390.1 L809.2,389.3 L809.6,388.2 L810.0,387.0 L810.4,385.7 L810.8,384.2 L811.1,382.7 L811.4,381.2 L811.6,379.5 L811.7,377.9 L811.7,376.3 L811.6,374.7 L811.4,373.1 L811.1,371.6 L810.7,370.1 L810.3,368.6 L809.8,367.1 L809.2,365.5 L808.6,364.0 L808.0,362.5 L807.3,361.0 L806.6,359.5 L805.8,358.1 L805.1,356.6 L804.2,355.1 L803.2,353.4 L802.1,351.8 L801.0,350.1 L799.9,348.5 L798.7,346.9 L797.5,345.3 L796.4,343.9 L795.3,342.6 L794.3,341.5 L793.4,340.6 L792.2,340.2ZM805.7,343.8 L805.8,344.9 L806.3,345.9 L807.0,347.1 L807.8,348.4 L808.7,349.7 L809.7,351.2 L810.7,352.6 L811.7,354.2 L812.7,355.7 L813.6,357.2 L814.5,358.8 L815.2,360.2 L816.0,361.7 L816.7,363.4 L817.4,365.0 L818.2,366.8 L818.9,368.6 L819.6,370.3 L820.2,372.1 L820.9,373.9 L821.5,375.6 L822.0,377.2 L822.5,378.8 L823.0,380.2 L823.3,381.6 L823.7,382.9 L823.9,384.3 L824.1,385.6 L824.3,386.9 L824.5,388.2 L824.7,389.4 L824.8,390.5 L825.0,391.5 L825.2,392.5 L825.5,393.3 L826.1,393.9 L826.7,393.9 L827.2,393.2 L827.4,392.4 L827.6,391.5 L827.7,390.4 L827.8,389.2 L827.8,388.0 L827.8,386.6 L827.7,385.2 L827.6,383.8 L827.4,382.3 L827.2,380.7 L826.8,379.2 L826.4,377.6 L826.0,376.0 L825.4,374.3 L824.8,372.5 L824.2,370.7 L823.5,368.8 L822.8,367.0 L822.0,365.2 L821.2,363.4 L820.4,361.6 L819.6,360.0 L818.8,358.4 L817.9,356.8 L816.8,355.2 L815.8,353.6 L814.6,352.1 L813.5,350.6 L812.3,349.2 L811.2,347.8 L810.1,346.6 L809.1,345.5 L808.1,344.6 L807.3,343.8 L806.3,343.4ZM818.4,348.5 L818.4,349.5 L819.0,350.5 L819.6,351.5 L820.4,352.7 L821.3,353.9 L822.2,355.1 L823.2,356.4 L824.2,357.8 L825.2,359.2 L826.2,360.6 L827.1,362.0 L827.9,363.4 L828.7,364.9 L829.5,366.4 L830.3,368.1 L831.2,369.7 L832.0,371.5 L832.8,373.2 L833.6,375.0 L834.4,376.8 L835.1,378.5 L835.8,380.3 L836.5,381.9 L837.1,383.6 L837.7,385.2 L838.3,386.9 L838.8,388.6 L839.3,390.4 L839.8,392.2 L840.3,393.9 L840.8,395.6 L841.2,397.2 L841.7,398.6 L842.1,399.9 L842.6,401.0 L843.4,401.8 L844.0,401.6 L844.4,400.6 L844.4,399.4 L844.2,398.1 L844.1,396.6 L843.8,395.0 L843.5,393.2 L843.2,391.4 L842.8,389.6 L842.4,387.7 L841.9,385.8 L841.4,384.0 L840.9,382.2 L840.3,380.5 L839.6,378.8 L838.9,377.0 L838.2,375.1 L837.4,373.3 L836.6,371.5 L835.8,369.7 L834.9,367.9 L834.0,366.2 L833.1,364.5 L832.2,362.9 L831.3,361.4 L830.3,359.9 L829.3,358.4 L828.2,357.0 L827.1,355.6 L825.9,354.3 L824.8,353.0 L823.7,351.8 L822.6,350.8 L821.6,349.8 L820.7,349.0 L819.8,348.4 L818.8,348.1ZM832.4,351.6 L832.5,352.7 L833.0,353.7 L833.7,354.9 L834.5,356.2 L835.3,357.6 L836.3,359.0 L837.3,360.5 L838.3,362.0 L839.3,363.6 L840.2,365.2 L841.1,366.7 L842.0,368.2 L842.8,369.7 L843.6,371.3 L844.4,372.9 L845.2,374.6 L846.0,376.3 L846.8,378.0 L847.6,379.7 L848.4,381.5 L849.2,383.2 L849.9,384.9 L850.6,386.6 L851.3,388.3 L852.0,390.0 L852.7,391.8 L853.4,393.7 L854.0,395.7 L854.7,397.6 L855.3,399.5 L855.9,401.4 L856.5,403.1 L857.1,404.7 L857.7,406.1 L858.3,407.3 L859.1,408.1 L859.7,407.9 L860.0,406.8 L859.9,405.5 L859.6,404.0 L859.3,402.3 L858.9,400.5 L858.5,398.6 L858.0,396.6 L857.5,394.6 L856.9,392.6 L856.3,390.6 L855.7,388.7 L855.1,386.9 L854.4,385.1 L853.7,383.4 L853.0,381.6 L852.2,379.8 L851.5,378.0 L850.7,376.2 L849.8,374.5 L849.0,372.7 L848.1,371.0 L847.2,369.4 L846.3,367.8 L845.4,366.2 L844.5,364.7 L843.4,363.1 L842.3,361.5 L841.2,360.0 L840.1,358.5 L838.9,357.1 L837.8,355.7 L836.8,354.5 L835.8,353.3 L834.8,352.4 L834.0,351.6 L833.0,351.2ZM846.7,356.3 L846.8,357.4 L847.3,358.5 L848.0,359.8 L848.8,361.2 L849.7,362.8 L850.7,364.4 L851.7,366.0 L852.7,367.7 L853.7,369.4 L854.7,371.1 L855.5,372.7 L856.3,374.2 L857.0,375.7 L857.7,377.2 L858.4,378.7 L859.0,380.2 L859.6,381.7 L860.3,383.2 L860.9,384.8 L861.5,386.4 L862.1,388.0 L862.7,389.6 L863.4,391.3 L864.0,392.9 L864.7,394.7 L865.5,396.6 L866.3,398.7 L867.1,400.8 L867.9,402.9 L868.8,405.0 L869.6,407.0 L870.3,408.9 L871.1,410.7 L871.8,412.2 L872.5,413.5 L873.3,414.4 L873.9,414.2 L874.0,413.0 L873.7,411.5 L873.3,409.9 L872.8,408.1 L872.2,406.1 L871.5,404.0 L870.8,401.8 L870.1,399.7 L869.4,397.5 L868.7,395.5 L868.0,393.5 L867.4,391.7 L866.8,390.0 L866.1,388.3 L865.6,386.7 L865.0,385.0 L864.4,383.5 L863.7,381.9 L863.1,380.3 L862.5,378.7 L861.8,377.2 L861.0,375.6 L860.3,374.1 L859.5,372.6 L858.6,371.0 L857.6,369.4 L856.5,367.7 L855.4,366.0 L854.3,364.4 L853.1,362.8 L852.0,361.2 L850.9,359.8 L849.9,358.5 L849.0,357.4 L848.1,356.5 L847.1,355.9ZM859.3,367.3 L859.4,368.3 L859.8,369.4 L860.4,370.5 L861.0,371.8 L861.8,373.1 L862.6,374.6 L863.5,376.1 L864.3,377.6 L865.2,379.1 L866.0,380.7 L866.8,382.2 L867.5,383.6 L868.2,385.0 L868.8,386.5 L869.5,388.0 L870.1,389.5 L870.7,391.1 L871.4,392.6 L872.0,394.2 L872.6,395.8 L873.3,397.4 L873.9,399.0 L874.6,400.6 L875.2,402.3 L875.9,404.0 L876.7,405.8 L877.5,407.7 L878.3,409.7 L879.1,411.6 L879.9,413.6 L880.7,415.5 L881.5,417.2 L882.2,418.8 L882.9,420.3 L883.6,421.5 L884.4,422.3 L884.8,422.1 L884.9,421.0 L884.6,419.6 L884.1,418.1 L883.6,416.4 L883.0,414.6 L882.3,412.7 L881.7,410.7 L880.9,408.7 L880.2,406.7 L879.5,404.7 L878.8,402.8 L878.2,401.1 L877.5,399.5 L876.9,397.8 L876.3,396.2 L875.7,394.6 L875.1,393.0 L874.4,391.4 L873.8,389.8 L873.1,388.2 L872.5,386.7 L871.8,385.2 L871.0,383.7 L870.3,382.2 L869.5,380.7 L868.6,379.2 L867.7,377.7 L866.8,376.1 L865.8,374.6 L864.8,373.2 L863.9,371.8 L863.0,370.5 L862.1,369.4 L861.3,368.4 L860.6,367.6 L859.7,367.1ZM774.1,374.8 L772.7,375.2 L771.9,376.0 L771.2,377.1 L770.4,378.4 L769.7,379.8 L769.0,381.3 L768.2,382.8 L767.5,384.3 L766.9,385.7 L766.3,387.1 L765.7,388.3 L765.2,389.3 L764.8,390.2 L764.4,391.0 L764.0,391.8 L763.7,392.6 L763.3,393.3 L763.0,394.0 L762.8,394.7 L762.6,395.4 L762.4,396.0 L762.3,396.7 L762.4,397.4 L763.2,398.3 L764.0,398.9 L765.2,399.1 L765.8,399.0 L766.4,398.7 L767.0,398.3 L767.5,397.8 L768.1,397.2 L768.6,396.6 L769.2,395.8 L769.8,395.0 L770.3,394.1 L770.8,393.2 L771.4,392.1 L771.9,391.0 L772.4,389.6 L772.9,388.2 L773.5,386.7 L774.0,385.1 L774.5,383.4 L775.0,381.9 L775.4,380.3 L775.7,378.9 L775.9,377.6 L775.8,376.4 L775.1,375.2ZM747.5,373.1 L746.2,373.9 L745.8,374.7 L745.7,375.6 L745.7,376.5 L745.8,377.6 L746.0,378.6 L746.3,379.6 L746.6,380.6 L747.0,381.5 L747.4,382.3 L748.1,382.9 L749.6,383.1 L750.4,382.9 L751.7,382.1 L752.1,381.3 L752.2,380.4 L752.2,379.5 L752.1,378.4 L751.9,377.4 L751.6,376.4 L751.3,375.4 L750.9,374.5 L750.5,373.7 L749.8,373.1 L748.3,372.9ZM704.1,303.6 L703.7,304.3 L703.3,305.3 L703.0,306.5 L702.6,307.9 L702.3,309.3 L701.9,310.9 L701.5,312.5 L701.0,314.1 L700.6,315.8 L700.1,317.4 L699.6,318.9 L699.1,320.3 L698.5,321.8 L697.8,323.2 L697.1,324.7 L696.3,326.3 L695.5,327.8 L694.7,329.3 L693.9,330.8 L693.1,332.3 L692.3,333.7 L691.6,335.1 L691.0,336.3 L690.5,337.5 L690.0,338.6 L689.7,339.6 L689.4,340.5 L689.1,341.4 L688.9,342.2 L688.7,343.0 L688.5,343.7 L688.4,344.3 L688.3,344.9 L688.3,345.4 L688.3,345.9 L688.4,346.4 L688.8,346.4 L689.1,346.1 L689.4,345.7 L689.6,345.2 L689.8,344.7 L690.0,344.1 L690.3,343.5 L690.5,342.7 L690.8,342.0 L691.1,341.1 L691.5,340.3 L691.9,339.3 L692.3,338.3 L692.8,337.2 L693.5,336.0 L694.2,334.7 L694.9,333.3 L695.7,331.8 L696.5,330.3 L697.4,328.8 L698.2,327.2 L698.9,325.7 L699.7,324.1 L700.3,322.6 L700.9,321.1 L701.5,319.5 L701.9,317.9 L702.4,316.3 L702.8,314.6 L703.2,312.9 L703.5,311.3 L703.8,309.7 L704.1,308.2 L704.3,306.8 L704.4,305.6 L704.5,304.5 L704.5,303.6ZM685.4,308.0 L685.0,308.8 L685.1,309.9 L685.2,311.0 L685.4,312.3 L685.6,313.7 L685.8,315.2 L686.1,316.7 L686.3,318.2 L686.5,319.7 L686.7,321.1 L686.7,322.4 L686.7,323.6 L686.7,324.8 L686.6,326.0 L686.5,327.1 L686.3,328.3 L686.1,329.5 L685.9,330.6 L685.6,331.8 L685.3,332.9 L685.0,334.0 L684.7,335.1 L684.3,336.2 L684.0,337.2 L683.6,338.2 L683.1,339.3 L682.6,340.4 L682.0,341.5 L681.3,342.6 L680.7,343.6 L680.1,344.7 L679.5,345.7 L679.0,346.6 L678.6,347.5 L678.3,348.3 L678.4,349.1 L678.8,349.5 L679.6,349.2 L680.3,348.7 L681.0,348.0 L681.7,347.2 L682.4,346.3 L683.2,345.4 L684.0,344.3 L684.8,343.2 L685.5,342.1 L686.2,340.9 L686.9,339.8 L687.4,338.6 L687.9,337.5 L688.3,336.3 L688.7,335.1 L689.1,333.9 L689.4,332.7 L689.7,331.4 L689.9,330.2 L690.1,328.9 L690.3,327.6 L690.4,326.2 L690.5,324.9 L690.5,323.6 L690.4,322.2 L690.2,320.7 L689.9,319.1 L689.6,317.6 L689.2,316.0 L688.8,314.5 L688.4,313.1 L688.0,311.7 L687.5,310.5 L687.1,309.4 L686.7,308.5 L686.0,307.8ZM716.9,323.6 L716.5,324.1 L716.3,324.8 L716.1,325.6 L715.9,326.6 L715.8,327.6 L715.6,328.6 L715.4,329.7 L715.1,330.7 L714.8,331.8 L714.4,332.7 L714.0,333.6 L713.5,334.4 L712.8,335.1 L711.9,335.9 L710.9,336.7 L709.7,337.6 L708.5,338.4 L707.2,339.2 L705.9,340.0 L704.7,340.8 L703.6,341.5 L702.6,342.1 L701.8,342.8 L701.3,343.5 L701.5,343.7 L702.3,343.6 L703.2,343.3 L704.3,342.8 L705.5,342.2 L706.8,341.5 L708.1,340.8 L709.5,340.0 L710.8,339.2 L712.1,338.4 L713.2,337.5 L714.3,336.6 L715.1,335.6 L715.8,334.6 L716.3,333.5 L716.7,332.4 L717.1,331.2 L717.3,330.1 L717.4,328.9 L717.5,327.8 L717.6,326.7 L717.6,325.8 L717.6,324.9 L717.5,324.2 L717.3,323.6ZM729.8,312.1 L729.5,313.0 L729.4,314.0 L729.4,315.2 L729.4,316.6 L729.4,318.1 L729.4,319.7 L729.5,321.3 L729.4,322.9 L729.4,324.6 L729.3,326.1 L729.1,327.7 L728.8,329.1 L728.5,330.5 L728.0,331.9 L727.6,333.4 L727.0,334.9 L726.4,336.5 L725.8,338.0 L725.2,339.5 L724.5,340.9 L723.8,342.2 L723.2,343.5 L722.5,344.7 L721.9,345.7 L721.3,346.6 L720.6,347.5 L719.9,348.2 L719.1,349.0 L718.4,349.6 L717.6,350.2 L716.8,350.8 L716.1,351.4 L715.5,351.9 L714.9,352.3 L714.4,352.8 L714.2,353.4 L714.4,353.8 L715.0,353.7 L715.6,353.5 L716.3,353.2 L717.1,352.8 L717.9,352.4 L718.7,351.9 L719.6,351.3 L720.5,350.6 L721.4,349.9 L722.3,349.0 L723.1,348.1 L723.9,347.1 L724.6,346.0 L725.3,344.7 L726.1,343.4 L726.8,342.0 L727.5,340.5 L728.2,339.0 L728.8,337.4 L729.4,335.8 L730.0,334.2 L730.4,332.6 L730.9,331.1 L731.2,329.5 L731.4,328.0 L731.6,326.3 L731.6,324.6 L731.6,322.9 L731.6,321.2 L731.4,319.6 L731.3,318.0 L731.1,316.5 L731.0,315.1 L730.8,313.9 L730.6,312.9 L730.2,312.1ZM739.8,319.3 L739.5,320.1 L739.5,321.1 L739.6,322.2 L739.7,323.5 L739.8,324.9 L740.0,326.3 L740.1,327.8 L740.2,329.3 L740.3,330.8 L740.3,332.2 L740.3,333.6 L740.2,334.9 L740.0,336.2 L739.8,337.4 L739.5,338.8 L739.2,340.1 L738.9,341.4 L738.5,342.8 L738.1,344.1 L737.6,345.4 L737.2,346.7 L736.8,347.9 L736.4,349.1 L736.0,350.3 L735.6,351.4 L735.1,352.5 L734.6,353.6 L734.1,354.8 L733.6,355.8 L733.1,356.9 L732.6,357.9 L732.2,358.9 L731.8,359.8 L731.4,360.6 L731.2,361.3 L731.2,362.0 L731.6,362.2 L732.2,361.8 L732.6,361.2 L733.2,360.5 L733.7,359.7 L734.3,358.8 L734.9,357.9 L735.5,356.8 L736.1,355.7 L736.7,354.6 L737.2,353.5 L737.8,352.3 L738.2,351.1 L738.7,350.0 L739.1,348.8 L739.6,347.5 L740.1,346.2 L740.5,344.8 L740.9,343.5 L741.3,342.1 L741.7,340.7 L742.0,339.3 L742.3,337.9 L742.5,336.5 L742.6,335.1 L742.7,333.7 L742.6,332.2 L742.5,330.6 L742.4,329.1 L742.2,327.5 L742.0,326.0 L741.7,324.6 L741.4,323.2 L741.2,322.0 L740.9,320.9 L740.6,320.0 L740.2,319.3ZM752.7,323.6 L752.2,324.6 L752.1,325.8 L752.0,327.3 L751.9,328.9 L751.9,330.7 L751.9,332.6 L751.8,334.5 L751.8,336.4 L751.7,338.3 L751.6,340.1 L751.5,341.9 L751.3,343.4 L751.1,344.9 L750.9,346.4 L750.6,348.0 L750.2,349.5 L749.9,351.0 L749.5,352.4 L749.1,353.9 L748.7,355.3 L748.3,356.6 L747.9,357.9 L747.5,359.0 L747.1,360.1 L746.8,361.1 L746.3,362.0 L745.9,362.9 L745.4,363.7 L744.9,364.5 L744.5,365.3 L744.0,366.0 L743.6,366.7 L743.2,367.3 L742.8,367.9 L742.6,368.5 L742.7,369.2 L743.1,369.4 L743.7,369.3 L744.2,369.0 L744.7,368.6 L745.3,368.1 L745.9,367.5 L746.5,366.9 L747.1,366.1 L747.8,365.3 L748.4,364.4 L749.0,363.4 L749.6,362.4 L750.1,361.3 L750.5,360.1 L751.0,358.9 L751.4,357.6 L751.9,356.2 L752.3,354.8 L752.7,353.3 L753.1,351.7 L753.4,350.2 L753.8,348.6 L754.0,347.0 L754.3,345.4 L754.5,343.8 L754.6,342.1 L754.7,340.3 L754.7,338.4 L754.6,336.4 L754.6,334.4 L754.5,332.5 L754.3,330.6 L754.2,328.9 L754.0,327.2 L753.8,325.8 L753.6,324.6 L753.1,323.6ZM681.3,357.8 L680.6,358.0 L680.1,358.5 L679.6,359.2 L679.0,359.9 L678.4,360.8 L677.8,361.6 L677.2,362.5 L676.7,363.4 L676.2,364.2 L675.8,365.0 L675.5,365.6 L675.6,366.3 L675.8,366.5 L676.5,366.3 L677.0,365.8 L677.5,365.1 L678.1,364.4 L678.7,363.5 L679.3,362.7 L679.9,361.8 L680.4,360.9 L680.9,360.1 L681.3,359.3 L681.6,358.7 L681.5,358.0ZM694.1,363.6 L693.8,364.2 L693.7,365.0 L693.6,365.9 L693.6,366.9 L693.6,368.0 L693.7,369.1 L693.7,370.3 L693.8,371.4 L694.0,372.6 L694.1,373.6 L694.3,374.6 L694.6,375.4 L694.9,376.2 L695.3,376.8 L695.8,377.4 L696.3,377.9 L696.8,378.3 L697.3,378.7 L697.8,379.0 L698.3,379.2 L698.7,379.4 L699.1,379.5 L699.4,379.6 L699.9,379.4 L700.1,379.2 L700.1,378.6 L699.9,378.3 L699.6,378.0 L699.3,377.7 L698.9,377.3 L698.6,377.0 L698.2,376.7 L697.9,376.3 L697.6,375.9 L697.3,375.5 L697.0,375.1 L696.8,374.6 L696.6,374.0 L696.4,373.2 L696.3,372.2 L696.1,371.2 L695.9,370.1 L695.8,368.9 L695.6,367.8 L695.5,366.7 L695.3,365.8 L695.2,364.9 L694.9,364.1 L694.5,363.6ZM714.1,357.9 L713.8,358.5 L713.7,359.2 L713.6,360.0 L713.6,361.0 L713.6,362.0 L713.6,363.1 L713.5,364.2 L713.5,365.3 L713.5,366.4 L713.4,367.4 L713.4,368.3 L713.3,369.1 L713.1,369.9 L712.9,370.7 L712.7,371.6 L712.5,372.4 L712.2,373.2 L712.0,374.0 L711.7,374.7 L711.5,375.5 L711.3,376.1 L711.1,376.7 L711.1,377.3 L711.3,377.8 L711.5,378.0 L712.0,377.7 L712.4,377.2 L712.7,376.7 L713.0,376.1 L713.4,375.4 L713.7,374.6 L714.1,373.8 L714.4,373.0 L714.7,372.1 L715.0,371.3 L715.2,370.4 L715.3,369.5 L715.4,368.5 L715.5,367.5 L715.5,366.4 L715.5,365.3 L715.5,364.2 L715.4,363.0 L715.3,362.0 L715.2,360.9 L715.1,360.0 L715.0,359.1 L714.8,358.4 L714.5,357.9ZM723.9,358.0 L723.6,358.6 L723.7,359.2 L723.9,359.9 L724.1,360.7 L724.4,361.5 L724.7,362.3 L725.0,363.1 L725.3,363.9 L725.6,364.7 L726.0,365.3 L726.3,365.8 L726.9,366.0 L727.1,366.0 L727.4,365.4 L727.3,364.8 L727.1,364.1 L726.9,363.3 L726.6,362.5 L726.3,361.7 L726.0,360.9 L725.7,360.1 L725.4,359.3 L725.0,358.7 L724.7,358.2 L724.1,358.0ZM678.6,379.2 L679.7,379.9 L681.1,380.3 L682.9,380.8 L684.8,381.2 L687.0,381.6 L689.2,382.0 L691.6,382.4 L693.9,382.8 L696.3,383.1 L698.6,383.3 L700.8,383.5 L702.9,383.5 L705.0,383.4 L707.0,383.2 L709.2,382.9 L711.3,382.6 L713.4,382.1 L715.4,381.7 L717.3,381.2 L719.1,380.7 L720.8,380.2 L722.2,379.8 L723.4,379.3 L724.3,378.6 L724.3,378.2 L723.1,377.9 L721.8,378.0 L720.3,378.2 L718.6,378.4 L716.8,378.7 L714.9,379.1 L712.8,379.4 L710.8,379.7 L708.8,380.0 L706.7,380.3 L704.8,380.4 L702.9,380.5 L701.0,380.5 L698.8,380.4 L696.6,380.2 L694.3,380.0 L691.9,379.7 L689.6,379.4 L687.3,379.1 L685.2,378.9 L683.2,378.6 L681.4,378.5 L679.9,378.4 L678.6,378.8ZM830.3,412.8 L830.9,413.5 L831.8,413.9 L832.8,414.2 L833.9,414.4 L835.2,414.7 L836.5,415.0 L837.9,415.2 L839.3,415.5 L840.7,415.8 L842.1,416.1 L843.4,416.3 L844.6,416.6 L845.8,416.9 L847.1,417.2 L848.5,417.6 L849.9,418.0 L851.3,418.4 L852.7,418.7 L854.0,419.1 L855.3,419.4 L856.4,419.7 L857.5,419.9 L858.5,420.0 L859.3,419.6 L859.5,419.2 L859.0,418.4 L858.2,417.9 L857.2,417.4 L856.1,417.0 L854.9,416.5 L853.6,416.0 L852.2,415.5 L850.8,415.0 L849.4,414.5 L848.0,414.1 L846.7,413.7 L845.4,413.4 L844.1,413.1 L842.7,412.9 L841.3,412.6 L839.8,412.4 L838.4,412.2 L837.0,412.1 L835.6,412.0 L834.3,411.9 L833.1,411.8 L832.0,411.8 L831.1,411.9 L830.3,412.4ZM838.8,424.8 L839.3,425.3 L840.0,425.5 L840.8,425.7 L841.7,425.8 L842.7,425.9 L843.7,425.9 L844.7,426.0 L845.8,426.1 L846.9,426.2 L847.9,426.3 L848.9,426.4 L849.8,426.5 L850.7,426.6 L851.7,426.8 L852.7,427.1 L853.7,427.3 L854.8,427.5 L855.9,427.8 L856.9,428.0 L857.9,428.3 L858.8,428.4 L859.6,428.5 L860.4,428.6 L861.0,428.2 L861.2,427.8 L860.8,427.1 L860.2,426.7 L859.4,426.4 L858.6,426.0 L857.6,425.6 L856.6,425.3 L855.6,424.9 L854.5,424.5 L853.4,424.2 L852.3,423.9 L851.2,423.7 L850.2,423.5 L849.2,423.4 L848.1,423.3 L847.0,423.3 L845.9,423.2 L844.8,423.2 L843.7,423.3 L842.7,423.3 L841.7,423.4 L840.8,423.5 L840.0,423.7 L839.3,423.9 L838.8,424.4ZM842.3,433.3 L842.6,433.9 L843.2,434.2 L843.8,434.5 L844.5,434.8 L845.3,435.0 L846.2,435.3 L847.1,435.5 L848.1,435.7 L849.0,435.9 L849.9,436.1 L850.9,436.3 L851.8,436.5 L852.7,436.6 L853.6,436.8 L854.7,436.9 L855.7,437.0 L856.8,437.1 L857.8,437.2 L858.8,437.3 L859.8,437.3 L860.7,437.3 L861.5,437.3 L862.2,437.2 L862.8,436.7 L862.8,436.3 L862.4,435.7 L861.7,435.4 L861.0,435.2 L860.1,435.0 L859.2,434.8 L858.2,434.6 L857.2,434.4 L856.1,434.2 L855.1,434.0 L854.1,433.8 L853.1,433.7 L852.2,433.5 L851.4,433.4 L850.5,433.2 L849.5,433.1 L848.6,432.9 L847.7,432.8 L846.7,432.7 L845.9,432.5 L845.0,432.5 L844.2,432.4 L843.5,432.4 L842.9,432.5 L842.3,432.9ZM849.1,445.3 L849.6,445.7 L850.2,445.8 L850.8,445.9 L851.5,445.9 L852.3,445.9 L853.2,445.9 L854.0,445.8 L854.9,445.8 L855.8,445.7 L856.6,445.6 L857.5,445.5 L858.3,445.3 L859.0,445.2 L859.8,445.0 L860.6,444.7 L861.5,444.5 L862.3,444.2 L863.0,443.9 L863.8,443.6 L864.5,443.4 L865.1,443.1 L865.6,442.8 L866.1,442.4 L866.4,441.9 L866.2,441.5 L865.7,441.2 L865.2,441.2 L864.5,441.2 L863.9,441.3 L863.1,441.5 L862.4,441.6 L861.6,441.8 L860.8,442.0 L860.0,442.2 L859.2,442.4 L858.4,442.5 L857.7,442.7 L857.0,442.8 L856.2,442.9 L855.4,443.1 L854.6,443.2 L853.7,443.4 L852.9,443.5 L852.1,443.7 L851.3,443.8 L850.6,444.0 L850.0,444.2 L849.5,444.4 L849.1,444.9ZM854.3,452.2 L854.7,452.6 L855.2,452.7 L855.8,452.8 L856.4,452.9 L857.1,452.9 L857.8,452.8 L858.5,452.8 L859.3,452.8 L860.1,452.7 L860.8,452.6 L861.6,452.5 L862.3,452.3 L863.0,452.1 L863.7,451.9 L864.5,451.7 L865.2,451.4 L866.0,451.1 L866.7,450.8 L867.4,450.5 L868.1,450.2 L868.6,449.9 L869.1,449.6 L869.5,449.3 L869.8,448.7 L869.6,448.3 L869.1,448.0 L868.6,448.0 L868.0,448.1 L867.3,448.2 L866.7,448.4 L865.9,448.6 L865.2,448.8 L864.5,449.0 L863.7,449.2 L863.0,449.4 L862.3,449.5 L861.7,449.7 L861.1,449.8 L860.4,449.9 L859.7,450.1 L859.0,450.2 L858.3,450.3 L857.5,450.5 L856.8,450.6 L856.2,450.7 L855.6,450.9 L855.1,451.1 L854.6,451.3 L854.3,451.8ZM858.0,462.2 L858.4,462.5 L858.7,462.6 L859.1,462.7 L859.6,462.7 L860.1,462.7 L860.7,462.7 L861.2,462.6 L861.8,462.6 L862.5,462.5 L863.1,462.4 L863.7,462.2 L864.3,462.1 L865.0,461.9 L865.6,461.6 L866.3,461.3 L867.1,461.0 L867.8,460.7 L868.5,460.4 L869.2,460.0 L869.8,459.7 L870.4,459.3 L870.9,459.0 L871.3,458.7 L871.6,458.2 L871.4,457.8 L870.9,457.6 L870.4,457.7 L869.8,457.8 L869.2,458.0 L868.5,458.3 L867.7,458.5 L867.0,458.8 L866.3,459.0 L865.6,459.3 L864.9,459.5 L864.2,459.7 L863.7,459.9 L863.2,460.1 L862.6,460.2 L862.0,460.3 L861.5,460.5 L860.9,460.6 L860.4,460.7 L859.9,460.8 L859.4,460.9 L859.0,461.1 L858.6,461.2 L858.2,461.4 L858.0,461.8ZM862.9,419.6 L863.5,419.9 L864.2,419.9 L865.0,419.8 L865.8,419.6 L866.7,419.4 L867.7,419.2 L868.7,418.9 L869.7,418.6 L870.7,418.3 L871.6,418.0 L872.6,417.7 L873.5,417.4 L874.4,417.1 L875.3,416.8 L876.3,416.5 L877.3,416.1 L878.3,415.7 L879.2,415.4 L880.2,415.0 L881.1,414.6 L881.9,414.2 L882.6,413.9 L883.1,413.5 L883.5,412.8 L883.3,412.4 L882.7,412.1 L882.0,412.1 L881.2,412.2 L880.3,412.4 L879.4,412.6 L878.4,412.8 L877.4,413.1 L876.4,413.4 L875.4,413.7 L874.4,414.0 L873.4,414.3 L872.5,414.6 L871.6,414.9 L870.7,415.2 L869.7,415.5 L868.8,415.9 L867.8,416.3 L866.8,416.7 L865.9,417.0 L865.1,417.4 L864.3,417.8 L863.6,418.1 L863.1,418.5 L862.7,419.2ZM866.0,426.2 L866.6,426.6 L867.2,426.7 L868.0,426.7 L868.8,426.7 L869.7,426.7 L870.6,426.6 L871.6,426.4 L872.6,426.3 L873.6,426.1 L874.6,425.9 L875.5,425.7 L876.4,425.4 L877.3,425.1 L878.3,424.8 L879.3,424.4 L880.2,424.0 L881.2,423.6 L882.1,423.1 L883.0,422.6 L883.9,422.2 L884.6,421.7 L885.3,421.3 L885.8,420.9 L886.1,420.2 L885.9,419.8 L885.2,419.5 L884.5,419.6 L883.8,419.8 L882.9,420.0 L882.0,420.3 L881.1,420.7 L880.1,421.0 L879.2,421.3 L878.2,421.7 L877.3,422.0 L876.4,422.3 L875.6,422.6 L874.8,422.8 L873.9,423.0 L873.0,423.3 L872.0,423.5 L871.1,423.7 L870.1,423.9 L869.2,424.2 L868.4,424.4 L867.6,424.6 L866.9,424.9 L866.4,425.2 L866.0,425.8ZM871.0,433.2 L871.6,433.6 L872.2,433.7 L872.8,433.7 L873.5,433.7 L874.3,433.6 L875.2,433.6 L876.1,433.4 L877.0,433.3 L877.9,433.1 L878.8,432.9 L879.6,432.7 L880.5,432.4 L881.3,432.1 L882.2,431.8 L883.0,431.4 L883.9,431.0 L884.8,430.5 L885.6,430.1 L886.4,429.6 L887.2,429.2 L887.8,428.7 L888.4,428.3 L888.9,427.9 L889.1,427.2 L888.9,426.8 L888.3,426.5 L887.6,426.6 L886.9,426.8 L886.2,427.1 L885.3,427.3 L884.5,427.7 L883.6,428.0 L882.8,428.4 L881.9,428.7 L881.1,429.0 L880.3,429.3 L879.5,429.6 L878.8,429.8 L878.0,430.0 L877.2,430.3 L876.4,430.5 L875.5,430.7 L874.7,430.9 L873.9,431.2 L873.1,431.4 L872.4,431.6 L871.8,431.9 L871.3,432.2 L871.0,432.8ZM878.0,441.2 L878.5,441.6 L879.1,441.6 L879.7,441.6 L880.3,441.6 L881.0,441.5 L881.8,441.4 L882.6,441.2 L883.3,441.1 L884.1,440.9 L884.9,440.7 L885.7,440.5 L886.4,440.3 L887.1,440.1 L887.9,439.8 L888.6,439.5 L889.4,439.2 L890.2,438.8 L890.9,438.5 L891.6,438.1 L892.3,437.8 L892.9,437.5 L893.4,437.1 L893.9,436.8 L894.1,436.2 L893.9,435.8 L893.4,435.5 L892.8,435.6 L892.2,435.7 L891.5,435.8 L890.8,436.0 L890.1,436.3 L889.3,436.5 L888.5,436.8 L887.7,437.0 L887.0,437.3 L886.3,437.5 L885.6,437.7 L884.9,437.9 L884.2,438.1 L883.5,438.3 L882.7,438.6 L882.0,438.8 L881.2,439.0 L880.5,439.3 L879.8,439.5 L879.2,439.7 L878.7,440.0 L878.2,440.3 L878.0,440.8ZM889.1,449.2 L889.5,449.5 L889.9,449.5 L890.3,449.5 L890.9,449.4 L891.4,449.3 L892.0,449.2 L892.6,449.1 L893.2,448.9 L893.8,448.7 L894.4,448.5 L895.0,448.3 L895.5,448.1 L896.0,447.8 L896.5,447.6 L897.0,447.3 L897.5,446.9 L898.0,446.6 L898.4,446.3 L898.9,445.9 L899.3,445.6 L899.6,445.3 L899.9,445.0 L900.1,444.6 L900.1,444.2 L899.9,443.8 L899.4,443.7 L899.1,443.7 L898.7,443.8 L898.2,444.0 L897.8,444.2 L897.3,444.5 L896.8,444.7 L896.3,445.0 L895.9,445.2 L895.4,445.5 L894.9,445.7 L894.5,445.9 L894.1,446.1 L893.6,446.3 L893.0,446.5 L892.5,446.7 L891.9,447.0 L891.4,447.2 L890.8,447.4 L890.3,447.6 L889.9,447.8 L889.4,448.1 L889.1,448.3 L888.9,448.8ZM895.0,457.1 L895.5,457.5 L896.0,457.5 L896.5,457.5 L897.1,457.4 L897.7,457.2 L898.3,457.0 L898.9,456.8 L899.5,456.5 L900.1,456.3 L900.5,456.0 L900.9,455.7 L901.0,455.1 L901.0,454.9 L900.5,454.5 L900.0,454.5 L899.5,454.5 L898.9,454.6 L898.3,454.8 L897.7,455.0 L897.1,455.2 L896.5,455.5 L895.9,455.7 L895.5,456.0 L895.1,456.3 L895.0,456.9ZM899.0,312.6 L899.2,313.4 L899.5,313.7 L899.9,314.0 L900.4,314.1 L900.9,314.2 L901.4,314.2 L901.9,314.3 L902.4,314.2 L902.9,314.1 L903.3,314.0 L903.7,313.7 L904.0,312.9 L904.0,312.3 L903.8,311.5 L903.5,311.2 L903.1,310.9 L902.6,310.8 L902.1,310.7 L901.6,310.7 L901.1,310.6 L900.6,310.7 L900.1,310.8 L899.7,310.9 L899.3,311.2 L899.0,312.0ZM851.8,352.5 L851.7,351.6 L851.1,350.8 L850.4,349.8 L849.5,348.8 L848.5,347.8 L847.5,346.7 L846.5,345.7 L845.4,344.7 L844.4,343.8 L843.5,343.0 L842.7,342.4 L841.8,342.3 L841.6,342.5 L841.7,343.4 L842.3,344.2 L843.0,345.2 L843.9,346.2 L844.9,347.2 L845.9,348.3 L846.9,349.3 L848.0,350.3 L849.0,351.2 L849.9,352.0 L850.7,352.6 L851.6,352.7ZM854.4,348.5 L854.3,347.6 L853.7,346.8 L853.0,345.8 L852.1,344.8 L851.1,343.8 L850.1,342.7 L849.1,341.7 L848.0,340.7 L847.0,339.8 L846.1,339.0 L845.3,338.4 L844.4,338.3 L844.2,338.5 L844.3,339.4 L844.9,340.2 L845.6,341.2 L846.5,342.2 L847.5,343.2 L848.5,344.3 L849.5,345.3 L850.6,346.3 L851.6,347.2 L852.5,348.0 L853.3,348.6 L854.2,348.7ZM856.6,345.2 L856.6,344.3 L856.2,343.4 L855.5,342.4 L854.8,341.3 L853.9,340.1 L853.0,339.0 L852.1,337.8 L851.2,336.7 L850.4,335.7 L849.5,334.8 L848.8,334.2 L847.9,333.9 L847.7,334.1 L847.7,335.0 L848.1,335.9 L848.8,336.9 L849.5,338.0 L850.4,339.2 L851.3,340.3 L852.2,341.5 L853.1,342.6 L853.9,343.6 L854.8,344.5 L855.5,345.1 L856.4,345.4ZM859.7,341.6 L859.7,340.7 L859.3,339.8 L858.6,338.8 L857.9,337.7 L857.0,336.5 L856.1,335.3 L855.2,334.1 L854.3,333.0 L853.5,332.0 L852.6,331.1 L851.9,330.5 L851.0,330.2 L850.8,330.4 L850.8,331.3 L851.2,332.2 L851.9,333.2 L852.6,334.3 L853.5,335.5 L854.4,336.7 L855.3,337.9 L856.2,339.0 L857.0,340.0 L857.9,340.9 L858.6,341.5 L859.5,341.8ZM862.8,338.0 L862.8,337.1 L862.4,336.2 L861.7,335.2 L861.0,334.1 L860.2,332.9 L859.3,331.7 L858.4,330.5 L857.5,329.4 L856.6,328.4 L855.8,327.5 L855.1,326.9 L854.2,326.6 L854.0,326.8 L854.0,327.7 L854.4,328.6 L855.1,329.6 L855.8,330.7 L856.6,331.9 L857.5,333.1 L858.4,334.3 L859.3,335.4 L860.2,336.4 L861.0,337.3 L861.7,337.9 L862.6,338.2ZM866.0,334.3 L866.0,333.4 L865.6,332.5 L864.9,331.5 L864.2,330.4 L863.3,329.2 L862.4,328.0 L861.5,326.8 L860.6,325.7 L859.8,324.7 L858.9,323.8 L858.2,323.2 L857.3,322.9 L857.1,323.1 L857.1,324.0 L857.5,324.9 L858.2,325.9 L858.9,327.0 L859.8,328.2 L860.7,329.4 L861.6,330.6 L862.5,331.7 L863.3,332.7 L864.2,333.6 L864.9,334.2 L865.8,334.5ZM869.1,330.7 L869.1,329.8 L868.7,328.9 L868.0,327.9 L867.3,326.8 L866.4,325.6 L865.5,324.4 L864.6,323.2 L863.7,322.1 L862.9,321.1 L862.0,320.2 L861.3,319.6 L860.4,319.3 L860.2,319.5 L860.2,320.4 L860.6,321.3 L861.3,322.3 L862.0,323.4 L862.9,324.6 L863.8,325.8 L864.7,327.0 L865.6,328.1 L866.4,329.1 L867.3,330.0 L868.0,330.6 L868.9,330.9ZM872.2,327.0 L872.2,326.1 L871.8,325.2 L871.1,324.2 L870.4,323.1 L869.5,321.9 L868.6,320.7 L867.7,319.5 L866.8,318.4 L866.0,317.4 L865.1,316.5 L864.4,315.9 L863.5,315.6 L863.3,315.8 L863.3,316.7 L863.7,317.6 L864.4,318.6 L865.1,319.7 L866.0,320.9 L866.9,322.1 L867.8,323.3 L868.7,324.4 L869.5,325.4 L870.4,326.3 L871.1,326.9 L872.0,327.2ZM874.4,324.8 L874.5,323.9 L874.3,323.0 L874.0,321.8 L873.5,320.6 L873.0,319.2 L872.4,317.9 L871.8,316.5 L871.2,315.2 L870.6,314.0 L870.0,312.9 L869.4,312.1 L868.7,311.6 L868.3,311.8 L868.2,312.7 L868.4,313.6 L868.7,314.8 L869.2,316.0 L869.7,317.4 L870.3,318.7 L870.9,320.1 L871.5,321.4 L872.1,322.6 L872.7,323.7 L873.3,324.5 L874.0,325.0ZM878.3,322.0 L878.4,321.1 L878.2,320.2 L877.9,319.0 L877.4,317.8 L876.9,316.4 L876.3,315.1 L875.7,313.7 L875.1,312.4 L874.5,311.2 L873.9,310.1 L873.3,309.3 L872.6,308.8 L872.2,309.0 L872.1,309.9 L872.3,310.8 L872.6,312.0 L873.1,313.2 L873.6,314.6 L874.2,315.9 L874.8,317.3 L875.4,318.6 L876.0,319.8 L876.6,320.9 L877.2,321.7 L877.9,322.2ZM880.9,320.7 L881.3,319.9 L881.3,318.9 L881.3,317.7 L881.1,316.3 L881.0,314.9 L880.8,313.4 L880.5,312.0 L880.3,310.6 L880.0,309.2 L879.7,308.1 L879.4,307.1 L878.8,306.5 L878.4,306.5 L878.0,307.3 L878.0,308.3 L878.0,309.5 L878.2,310.9 L878.3,312.3 L878.5,313.8 L878.8,315.2 L879.0,316.6 L879.3,318.0 L879.6,319.1 L879.9,320.1 L880.5,320.7ZM883.3,319.1 L883.9,318.5 L884.2,317.5 L884.5,316.4 L884.8,315.0 L885.0,313.6 L885.3,312.2 L885.5,310.7 L885.6,309.3 L885.8,307.9 L885.8,306.7 L885.8,305.7 L885.4,304.9 L885.0,304.9 L884.4,305.5 L884.1,306.5 L883.8,307.6 L883.5,309.0 L883.3,310.4 L883.0,311.8 L882.8,313.3 L882.7,314.7 L882.5,316.1 L882.5,317.3 L882.5,318.3 L882.9,319.1ZM888.1,318.8 L888.7,318.2 L889.0,317.2 L889.3,316.1 L889.6,314.7 L889.8,313.3 L890.1,311.9 L890.3,310.4 L890.4,309.0 L890.6,307.6 L890.6,306.4 L890.6,305.4 L890.2,304.6 L889.8,304.6 L889.2,305.2 L888.9,306.2 L888.6,307.3 L888.3,308.7 L888.1,310.1 L887.8,311.5 L887.6,313.0 L887.5,314.4 L887.3,315.8 L887.3,317.0 L887.3,318.0 L887.7,318.8ZM892.0,318.5 L892.7,318.0 L893.1,317.1 L893.6,316.0 L894.0,314.7 L894.5,313.4 L894.9,312.0 L895.3,310.5 L895.6,309.2 L895.9,307.9 L896.2,306.7 L896.3,305.7 L896.0,304.8 L895.6,304.8 L894.9,305.3 L894.5,306.2 L894.0,307.3 L893.6,308.6 L893.1,309.9 L892.7,311.3 L892.3,312.8 L892.0,314.1 L891.7,315.4 L891.4,316.6 L891.3,317.6 L891.6,318.5ZM896.8,318.8 L897.5,318.3 L897.9,317.4 L898.4,316.3 L898.8,315.0 L899.2,313.7 L899.6,312.3 L900.0,310.8 L900.4,309.5 L900.7,308.2 L900.9,307.0 L901.0,306.0 L900.7,305.1 L900.3,305.1 L899.6,305.6 L899.2,306.5 L898.7,307.6 L898.3,308.9 L897.9,310.2 L897.5,311.6 L897.1,313.1 L896.7,314.4 L896.4,315.7 L896.2,316.9 L896.1,317.9 L896.4,318.8ZM644.9,309.2 L645.2,309.7 L645.6,310.1 L646.1,310.4 L646.7,310.8 L647.4,311.1 L648.1,311.5 L648.9,311.9 L649.6,312.3 L650.3,312.7 L651.0,313.2 L651.7,313.6 L652.3,314.0 L652.8,314.5 L653.4,315.0 L654.0,315.5 L654.6,316.0 L655.2,316.5 L655.7,317.0 L656.3,317.6 L656.9,318.2 L657.4,318.8 L657.9,319.4 L658.4,320.0 L658.9,320.7 L659.4,321.4 L659.9,322.3 L660.4,323.2 L660.9,324.3 L661.5,325.3 L662.0,326.3 L662.4,327.4 L662.9,328.3 L663.4,329.2 L663.8,330.0 L664.2,330.7 L664.8,331.1 L665.2,330.9 L665.3,330.2 L665.2,329.5 L664.9,328.6 L664.6,327.7 L664.3,326.6 L663.9,325.5 L663.5,324.4 L663.1,323.3 L662.6,322.2 L662.1,321.2 L661.6,320.2 L661.1,319.3 L660.5,318.5 L660.0,317.8 L659.4,317.0 L658.8,316.4 L658.2,315.7 L657.6,315.1 L657.0,314.5 L656.4,313.9 L655.7,313.4 L655.1,312.9 L654.4,312.4 L653.7,312.0 L653.0,311.5 L652.3,311.1 L651.4,310.6 L650.6,310.3 L649.8,309.9 L649.0,309.6 L648.2,309.3 L647.5,309.1 L646.8,308.9 L646.2,308.7 L645.6,308.7 L645.1,308.8ZM640.0,332.1 L640.4,332.6 L640.9,332.9 L641.6,333.2 L642.4,333.5 L643.3,333.9 L644.2,334.2 L645.2,334.5 L646.2,334.9 L647.1,335.2 L648.1,335.4 L648.9,335.7 L649.7,335.9 L650.5,336.1 L651.3,336.3 L652.1,336.5 L652.9,336.7 L653.7,336.9 L654.4,337.0 L655.1,337.2 L655.8,337.3 L656.4,337.3 L657.0,337.4 L657.5,337.4 L658.0,337.1 L658.0,336.9 L657.7,336.4 L657.3,336.2 L656.8,336.0 L656.2,335.8 L655.5,335.6 L654.8,335.3 L654.1,335.1 L653.3,334.9 L652.6,334.7 L651.8,334.5 L651.0,334.3 L650.3,334.1 L649.5,333.8 L648.6,333.6 L647.7,333.3 L646.7,333.1 L645.7,332.8 L644.8,332.5 L643.8,332.3 L642.9,332.1 L642.0,331.9 L641.3,331.8 L640.6,331.7 L640.0,331.9ZM647.0,330.1 L647.2,330.4 L647.6,330.6 L648.0,330.7 L648.4,330.8 L648.9,331.0 L649.5,331.1 L650.0,331.2 L650.6,331.3 L651.2,331.4 L651.8,331.6 L652.3,331.7 L652.9,331.7 L653.5,331.8 L654.1,331.9 L654.7,332.0 L655.4,332.1 L656.1,332.2 L656.8,332.2 L657.4,332.3 L658.1,332.3 L658.6,332.4 L659.2,332.4 L659.6,332.3 L660.0,332.1 L660.0,331.9 L659.7,331.6 L659.3,331.4 L658.8,331.3 L658.2,331.2 L657.6,331.0 L657.0,330.9 L656.3,330.8 L655.6,330.7 L654.9,330.6 L654.3,330.4 L653.7,330.3 L653.1,330.3 L652.6,330.2 L652.0,330.1 L651.4,330.0 L650.8,329.9 L650.2,329.9 L649.7,329.8 L649.1,329.7 L648.6,329.7 L648.1,329.7 L647.7,329.6 L647.3,329.7 L647.0,329.9ZM662.9,328.1 L662.7,328.8 L662.9,329.6 L663.1,330.5 L663.4,331.5 L663.7,332.5 L664.1,333.7 L664.4,334.8 L664.8,336.0 L665.1,337.2 L665.5,338.3 L665.7,339.3 L666.0,340.2 L666.2,341.1 L666.3,342.1 L666.5,343.0 L666.6,344.0 L666.7,344.9 L666.8,345.8 L666.9,346.7 L667.0,347.5 L667.1,348.3 L667.3,349.0 L667.4,349.6 L667.8,350.0 L668.2,350.0 L668.5,349.5 L668.6,348.9 L668.6,348.2 L668.7,347.4 L668.7,346.6 L668.7,345.7 L668.6,344.7 L668.6,343.8 L668.5,342.8 L668.4,341.7 L668.2,340.7 L668.0,339.8 L667.8,338.8 L667.5,337.7 L667.1,336.6 L666.7,335.4 L666.3,334.2 L665.8,333.1 L665.4,332.0 L664.9,330.9 L664.5,329.9 L664.1,329.1 L663.7,328.4 L663.1,327.9ZM681.8,305.0 L681.5,306.1 L681.6,307.3 L681.8,308.7 L682.1,310.3 L682.5,312.0 L682.8,313.7 L683.2,315.6 L683.6,317.5 L683.9,319.4 L684.2,321.3 L684.4,323.2 L684.5,325.1 L684.5,327.0 L684.5,329.1 L684.4,331.4 L684.3,333.8 L684.1,336.2 L683.9,338.6 L683.7,341.0 L683.6,343.2 L683.4,345.3 L683.4,347.1 L683.4,348.7 L683.8,350.0 L684.2,350.0 L684.8,348.9 L685.2,347.3 L685.6,345.5 L685.9,343.5 L686.2,341.2 L686.6,338.9 L686.9,336.5 L687.1,334.0 L687.3,331.6 L687.5,329.2 L687.5,327.0 L687.5,324.9 L687.4,323.0 L687.1,320.9 L686.8,318.9 L686.4,316.9 L685.9,315.0 L685.4,313.1 L684.9,311.4 L684.4,309.7 L683.9,308.2 L683.4,306.9 L682.9,305.8 L682.2,305.0ZM637.9,315.1 L637.9,315.5 L638.1,315.8 L638.4,316.1 L638.8,316.5 L639.1,316.8 L639.5,317.1 L640.0,317.4 L640.4,317.7 L640.8,317.9 L641.2,318.1 L641.5,318.2 L641.9,318.1 L642.1,317.9 L642.1,317.5 L641.9,317.2 L641.6,316.9 L641.2,316.5 L640.9,316.2 L640.5,315.9 L640.0,315.6 L639.6,315.3 L639.2,315.1 L638.8,314.9 L638.5,314.8 L638.1,314.9ZM750.4,375.1 L749.4,375.3 L749.0,375.8 L748.6,376.5 L748.3,377.2 L748.0,378.0 L747.8,378.9 L747.6,379.7 L747.4,380.6 L747.4,381.4 L747.4,382.1 L747.5,382.8 L748.3,383.4 L748.9,383.6 L749.9,383.4 L750.3,382.9 L750.7,382.2 L751.0,381.5 L751.3,380.7 L751.5,379.8 L751.7,379.0 L751.9,378.1 L751.9,377.3 L751.9,376.6 L751.8,375.9 L751.0,375.3ZM763.9,369.9 L762.9,370.4 L762.3,371.3 L761.9,372.3 L761.4,373.6 L761.1,374.9 L760.7,376.3 L760.4,377.7 L760.1,379.1 L760.0,380.4 L759.9,381.5 L760.0,382.5 L760.7,383.4 L761.3,383.6 L762.3,383.1 L762.9,382.2 L763.3,381.2 L763.8,379.9 L764.1,378.6 L764.5,377.2 L764.8,375.8 L765.1,374.4 L765.2,373.1 L765.3,372.0 L765.2,371.0 L764.5,370.1ZM775.2,375.1 L774.2,375.4 L773.6,376.0 L773.2,376.8 L772.7,377.7 L772.2,378.7 L771.8,379.8 L771.3,380.8 L770.9,381.9 L770.4,382.9 L770.0,383.9 L769.6,384.8 L769.3,385.5 L768.9,386.2 L768.5,386.9 L768.1,387.6 L767.7,388.2 L767.3,388.9 L766.9,389.6 L766.5,390.3 L766.1,390.9 L765.8,391.5 L765.6,392.1 L765.5,392.7 L765.9,393.6 L766.5,394.0 L767.4,394.2 L767.9,394.0 L768.5,393.7 L769.0,393.3 L769.6,392.8 L770.2,392.2 L770.8,391.6 L771.4,390.9 L772.0,390.2 L772.5,389.4 L773.1,388.5 L773.5,387.7 L774.0,386.7 L774.4,385.7 L774.8,384.6 L775.1,383.5 L775.5,382.3 L775.8,381.1 L776.1,380.0 L776.3,378.9 L776.4,377.9 L776.5,377.0 L776.4,376.1 L775.8,375.3ZM787.7,369.9 L787.0,370.3 L786.6,370.9 L786.3,371.7 L786.1,372.5 L785.8,373.3 L785.6,374.3 L785.3,375.2 L785.1,376.2 L784.8,377.1 L784.6,378.1 L784.3,378.9 L784.1,379.8 L783.8,380.6 L783.4,381.5 L783.0,382.4 L782.5,383.4 L782.1,384.4 L781.6,385.4 L781.2,386.4 L780.8,387.3 L780.5,388.2 L780.2,389.0 L780.1,389.7 L780.4,390.6 L781.0,390.8 L781.8,390.7 L782.4,390.2 L782.9,389.5 L783.5,388.8 L784.1,387.9 L784.7,387.0 L785.3,386.1 L785.9,385.1 L786.4,384.0 L786.9,383.0 L787.4,382.0 L787.7,381.0 L788.1,380.1 L788.3,379.0 L788.5,378.0 L788.7,376.9 L788.9,375.9 L789.0,374.8 L789.0,373.9 L789.1,372.9 L789.1,372.1 L789.0,371.3 L788.9,370.7 L788.3,370.1ZM797.0,380.3 L796.0,380.5 L795.4,381.1 L794.8,381.8 L794.3,382.8 L793.9,383.8 L793.4,384.8 L793.0,385.9 L792.6,386.9 L792.4,388.0 L792.2,388.9 L792.2,389.7 L792.8,390.6 L793.4,390.8 L794.4,390.6 L795.0,390.0 L795.6,389.3 L796.1,388.3 L796.5,387.3 L797.0,386.3 L797.4,385.2 L797.8,384.2 L798.0,383.1 L798.2,382.2 L798.2,381.4 L797.6,380.5ZM808.4,370.0 L807.8,370.8 L807.5,371.8 L807.4,373.0 L807.2,374.3 L807.2,375.8 L807.1,377.3 L807.1,378.8 L807.0,380.3 L807.0,381.7 L806.9,383.1 L806.8,384.3 L806.8,385.3 L806.7,386.2 L806.6,387.1 L806.4,387.9 L806.3,388.7 L806.1,389.4 L806.0,390.1 L805.9,390.8 L805.8,391.4 L805.7,392.0 L805.7,392.6 L805.8,393.1 L806.3,393.7 L806.9,393.9 L807.6,393.7 L808.0,393.4 L808.3,392.9 L808.7,392.4 L809.0,391.8 L809.3,391.1 L809.6,390.4 L809.9,389.6 L810.1,388.7 L810.3,387.7 L810.5,386.7 L810.6,385.7 L810.7,384.5 L810.7,383.2 L810.7,381.8 L810.7,380.3 L810.6,378.8 L810.6,377.2 L810.4,375.7 L810.3,374.3 L810.1,372.9 L809.9,371.7 L809.7,370.8 L809.0,370.0ZM819.8,372.0 L819.2,372.6 L819.0,373.5 L818.8,374.5 L818.6,375.6 L818.5,376.9 L818.4,378.2 L818.2,379.5 L818.1,380.8 L818.0,382.0 L817.8,383.2 L817.7,384.3 L817.5,385.2 L817.4,386.1 L817.2,386.9 L816.9,387.7 L816.7,388.5 L816.5,389.2 L816.2,390.0 L816.0,390.7 L815.8,391.4 L815.6,392.0 L815.5,392.6 L815.5,393.1 L815.8,393.7 L816.2,393.9 L816.8,393.7 L817.2,393.3 L817.6,392.9 L817.9,392.3 L818.3,391.7 L818.7,391.0 L819.0,390.3 L819.4,389.4 L819.7,388.6 L820.0,387.7 L820.3,386.7 L820.5,385.8 L820.6,384.7 L820.8,383.6 L820.9,382.3 L820.9,381.0 L821.0,379.6 L821.0,378.3 L821.0,377.0 L821.0,375.7 L820.9,374.6 L820.8,373.6 L820.7,372.7 L820.2,372.0Z"/>
<path d="M661.0,300.0 C662.2,299.0 668.3,302.3 670.0,304.0 C671.7,305.7 672.2,309.0 671.0,310.0 C669.8,311.0 664.7,311.7 663.0,310.0 C661.3,308.3 659.8,301.0 661.0,300.0 Z" fill="#17100a"/>
<path d="M650.0,296.0 C650.8,294.5 654.7,294.5 656.0,296.0 C657.3,297.5 658.8,303.5 658.0,305.0 C657.2,306.5 652.3,306.5 651.0,305.0 C649.7,303.5 649.2,297.5 650.0,296.0 Z" fill="#9a8068"/>
<circle cx="643.6" cy="325.3" r="1.6" fill="#e0a030"/>
<path d="M645.0,343.0 C647.0,341.8 655.8,343.5 658.0,345.0 C660.2,346.5 660.0,350.8 658.0,352.0 C656.0,353.2 648.2,353.5 646.0,352.0 C643.8,350.5 643.0,344.2 645.0,343.0 Z" fill="#17100a"/>

</g>
<g fill="none" stroke="#f0f0ff" stroke-width="0.6" opacity="0.8"><path d="M638.0,356.0 L620.0,366.0"/><path d="M640.0,358.0 L622.0,370.0"/><path d="M642.0,360.0 L626.0,372.0"/><path d="M639.0,357.0 L618.0,362.0"/><path d="M644.0,361.0 L630.0,373.0"/>
</g>
<rect x="521" y="227" width="446" height="279" fill="none" stroke="#000" stroke-width="2"/>
<path d="M744,210 V227" stroke="#000" stroke-width="2"/>
<g fill="#000" stroke="#777" stroke-width="0.6">
<circle cx="744" cy="202.7" r="7.8"/>
<circle cx="521" cy="227" r="7.6"/><circle cx="967" cy="227" r="7.6"/>
<circle cx="521" cy="506" r="7.6"/><circle cx="967" cy="506" r="7.6"/>
</g>
</g>
</svg>
<!--/T-->

<!-- left tools -->
<div class="a grp" style="top:66px;height:77px">
  <div class="a" style="left:0;top:0;width:51px;height:38px;background:#404040"></div>
  <div class="a" style="left:0;top:38px;width:51px;height:1px;background:#555"></div>
</div>
<div class="a grp" style="top:153px;height:77px">
  <div class="a" style="left:0;top:38px;width:51px;height:1px;background:#555"></div>
</div>
<div class="a grp" style="top:240px;height:39px"></div>

<svg class="a" style="left:0;top:60px" width="63" height="230" viewBox="0 60 63 230">
<circle cx="31" cy="84.6" r="11.3" fill="#00d000" stroke="#fff" stroke-width="1.6"/>
<path d="M25,84.6 H37 M31,78.6 V90.6" stroke="#fff" stroke-width="2.8"/>
<g transform="translate(32.9,120.8) rotate(-45)"><rect x="-8.7" y="-4.55" width="17.4" height="9.1" rx="2" fill="none" stroke="#fff" stroke-width="1.8"/><path d="M-1,-5.45 H7.6 Q9.6,-5.45 9.6,-3.45 V3.45 Q9.6,5.45 7.6,5.45 H-1 Z" fill="#fff"/></g><rect x="19" y="133.0" width="22.3" height="2.1" fill="#fff"/>
<circle cx="31" cy="171.6" r="11.3" fill="#dbd800" stroke="#fff" stroke-width="1.6"/>
<g transform="translate(32.9,207.8) rotate(-45)"><rect x="-8.7" y="-4.55" width="17.4" height="9.1" rx="2" fill="none" stroke="#fff" stroke-width="1.8"/><path d="M-1,-5.45 H7.6 Q9.6,-5.45 9.6,-3.45 V3.45 Q9.6,5.45 7.6,5.45 H-1 Z" fill="#fff"/></g><rect x="19" y="220.0" width="22.3" height="2.1" fill="#e2d900"/>
<path transform="translate(31,259)" d="M0,-12 L4.3,-7.3 H2 V-2 H7.3 V-4.3 L12,0 L7.3,4.3 V2 H2 V7.3 H4.3 L0,12 L-4.3,7.3 H-2 V2 H-7.3 V4.3 L-12,0 L-7.3,-4.3 V-2 H-2 V-7.3 H-4.3 Z" fill="#fff"/>
</svg>
<svg class="a" style="left:978px;top:73px;z-index:5" width="170" height="40" viewBox="978 73 170 40">
<rect x="995.5" y="82.8" width="15.4" height="15.6" rx="3.5" fill="none" stroke="#fff" stroke-width="2.6"/>
<rect x="998.6" y="85.8" width="20.9" height="21.3" rx="5" fill="#404040"/>
<rect x="1000.1" y="87.3" width="17.9" height="18.3" rx="4" fill="#fff"/>
<rect x="1050.2" y="81.5" width="17.8" height="18.2" rx="4.5" fill="#fff"/>
<rect x="1054.1" y="85.4" width="21.6" height="22.1" rx="5.5" fill="#2b2b2b"/>
<rect x="1057.4" y="88.7" width="15" height="15.5" rx="3.5" fill="none" stroke="#fff" stroke-width="3.2"/>
<path d="M1114.60,83.60 L1117.95,91.65 L1126.64,92.35 L1120.02,98.02 L1122.04,106.50 L1114.60,101.96 L1107.16,106.50 L1109.18,98.02 L1102.56,92.35 L1111.25,91.65 Z" fill="#9a9a9a"/>
<path d="M1118.80,82.10 L1122.15,90.15 L1130.84,90.85 L1124.22,96.52 L1126.24,105.00 L1118.80,100.46 L1111.36,105.00 L1113.38,96.52 L1106.76,90.85 L1115.45,90.15 Z" fill="#2b2b2b" stroke="#2b2b2b" stroke-width="1.5" stroke-linejoin="round"/>
<path d="M1118.80,82.10 L1122.15,90.15 L1130.84,90.85 L1124.22,96.52 L1126.24,105.00 L1118.80,100.46 L1111.36,105.00 L1113.38,96.52 L1106.76,90.85 L1115.45,90.15 Z" fill="#fff"/>
</svg>
<!-- sidebar -->
<div class="a" style="left:978px;top:73px;width:169px;height:46px;border:1px solid #555;border-bottom:none;border-radius:5px 5px 0 0;overflow:hidden">
  <div class="a" style="left:0;top:0;width:55px;height:42px;background:#404040"></div>
  <div class="a" style="left:55px;top:0;width:1px;height:42px;background:#555"></div>
  <div class="a" style="left:111px;top:0;width:1px;height:42px;background:#555"></div>
  <div class="a" style="left:0;top:41px;width:169px;height:5px;background:#8e8e8e"></div>
</div>
<div class="a lbl" style="top:130px;font-weight:bold;letter-spacing:0.25px">Foreground</div>
<div class="a lbl" style="top:153px;letter-spacing:0.35px">Offset the Boundary</div>
<div class="a box" style="top:177px"><div class="div"></div><svg class="a" style="left:145px;top:0" width="22" height="28" viewBox="0 0 22 28"><path d="M7.5,9 L11,5 L14.5,9 Z M7.5,19.5 H14.5 L11,23.5 Z" fill="#fff"/></svg><div class="a lbl" style="left:8px;top:7px">0</div></div>
<div class="a lbl" style="top:218px;letter-spacing:0.3px">Feathering Radius</div>
<div class="a box" style="top:241px"><div class="div"></div><svg class="a" style="left:145px;top:0" width="22" height="28" viewBox="0 0 22 28"><path d="M7.5,9 L11,5 L14.5,9 Z M7.5,19.5 H14.5 L11,23.5 Z" fill="#fff"/></svg><div class="a lbl" style="left:8px;top:7px">2</div></div>
<div class="a lbl" style="top:282px;letter-spacing:0.5px">Effect</div>
<div class="a box" style="top:305px"><div class="div"></div><svg class="a" style="left:145px;top:0" width="22" height="28" viewBox="0 0 22 28"><path d="M7.5,12.5 H14.5 L11,16.5 Z" fill="#fff"/></svg><div class="a lbl" style="left:5px;top:7px;letter-spacing:0.3px">None</div></div>

<div class="a box" style="top:627px;height:34px"><div class="div"></div><svg class="a" style="left:145px;top:0" width="22" height="32" viewBox="0 0 22 32"><path d="M7.5,14.5 H14.5 L11,18.5 Z" fill="#fff"/></svg><div class="a" style="left:69px;top:10px;font-size:11px;font-weight:bold;color:#fff">Reset</div></div>
<div class="a lbl" style="left:1089px;top:680px;letter-spacing:0.3px">Credits: 2</div>

</div>
</body></html>
